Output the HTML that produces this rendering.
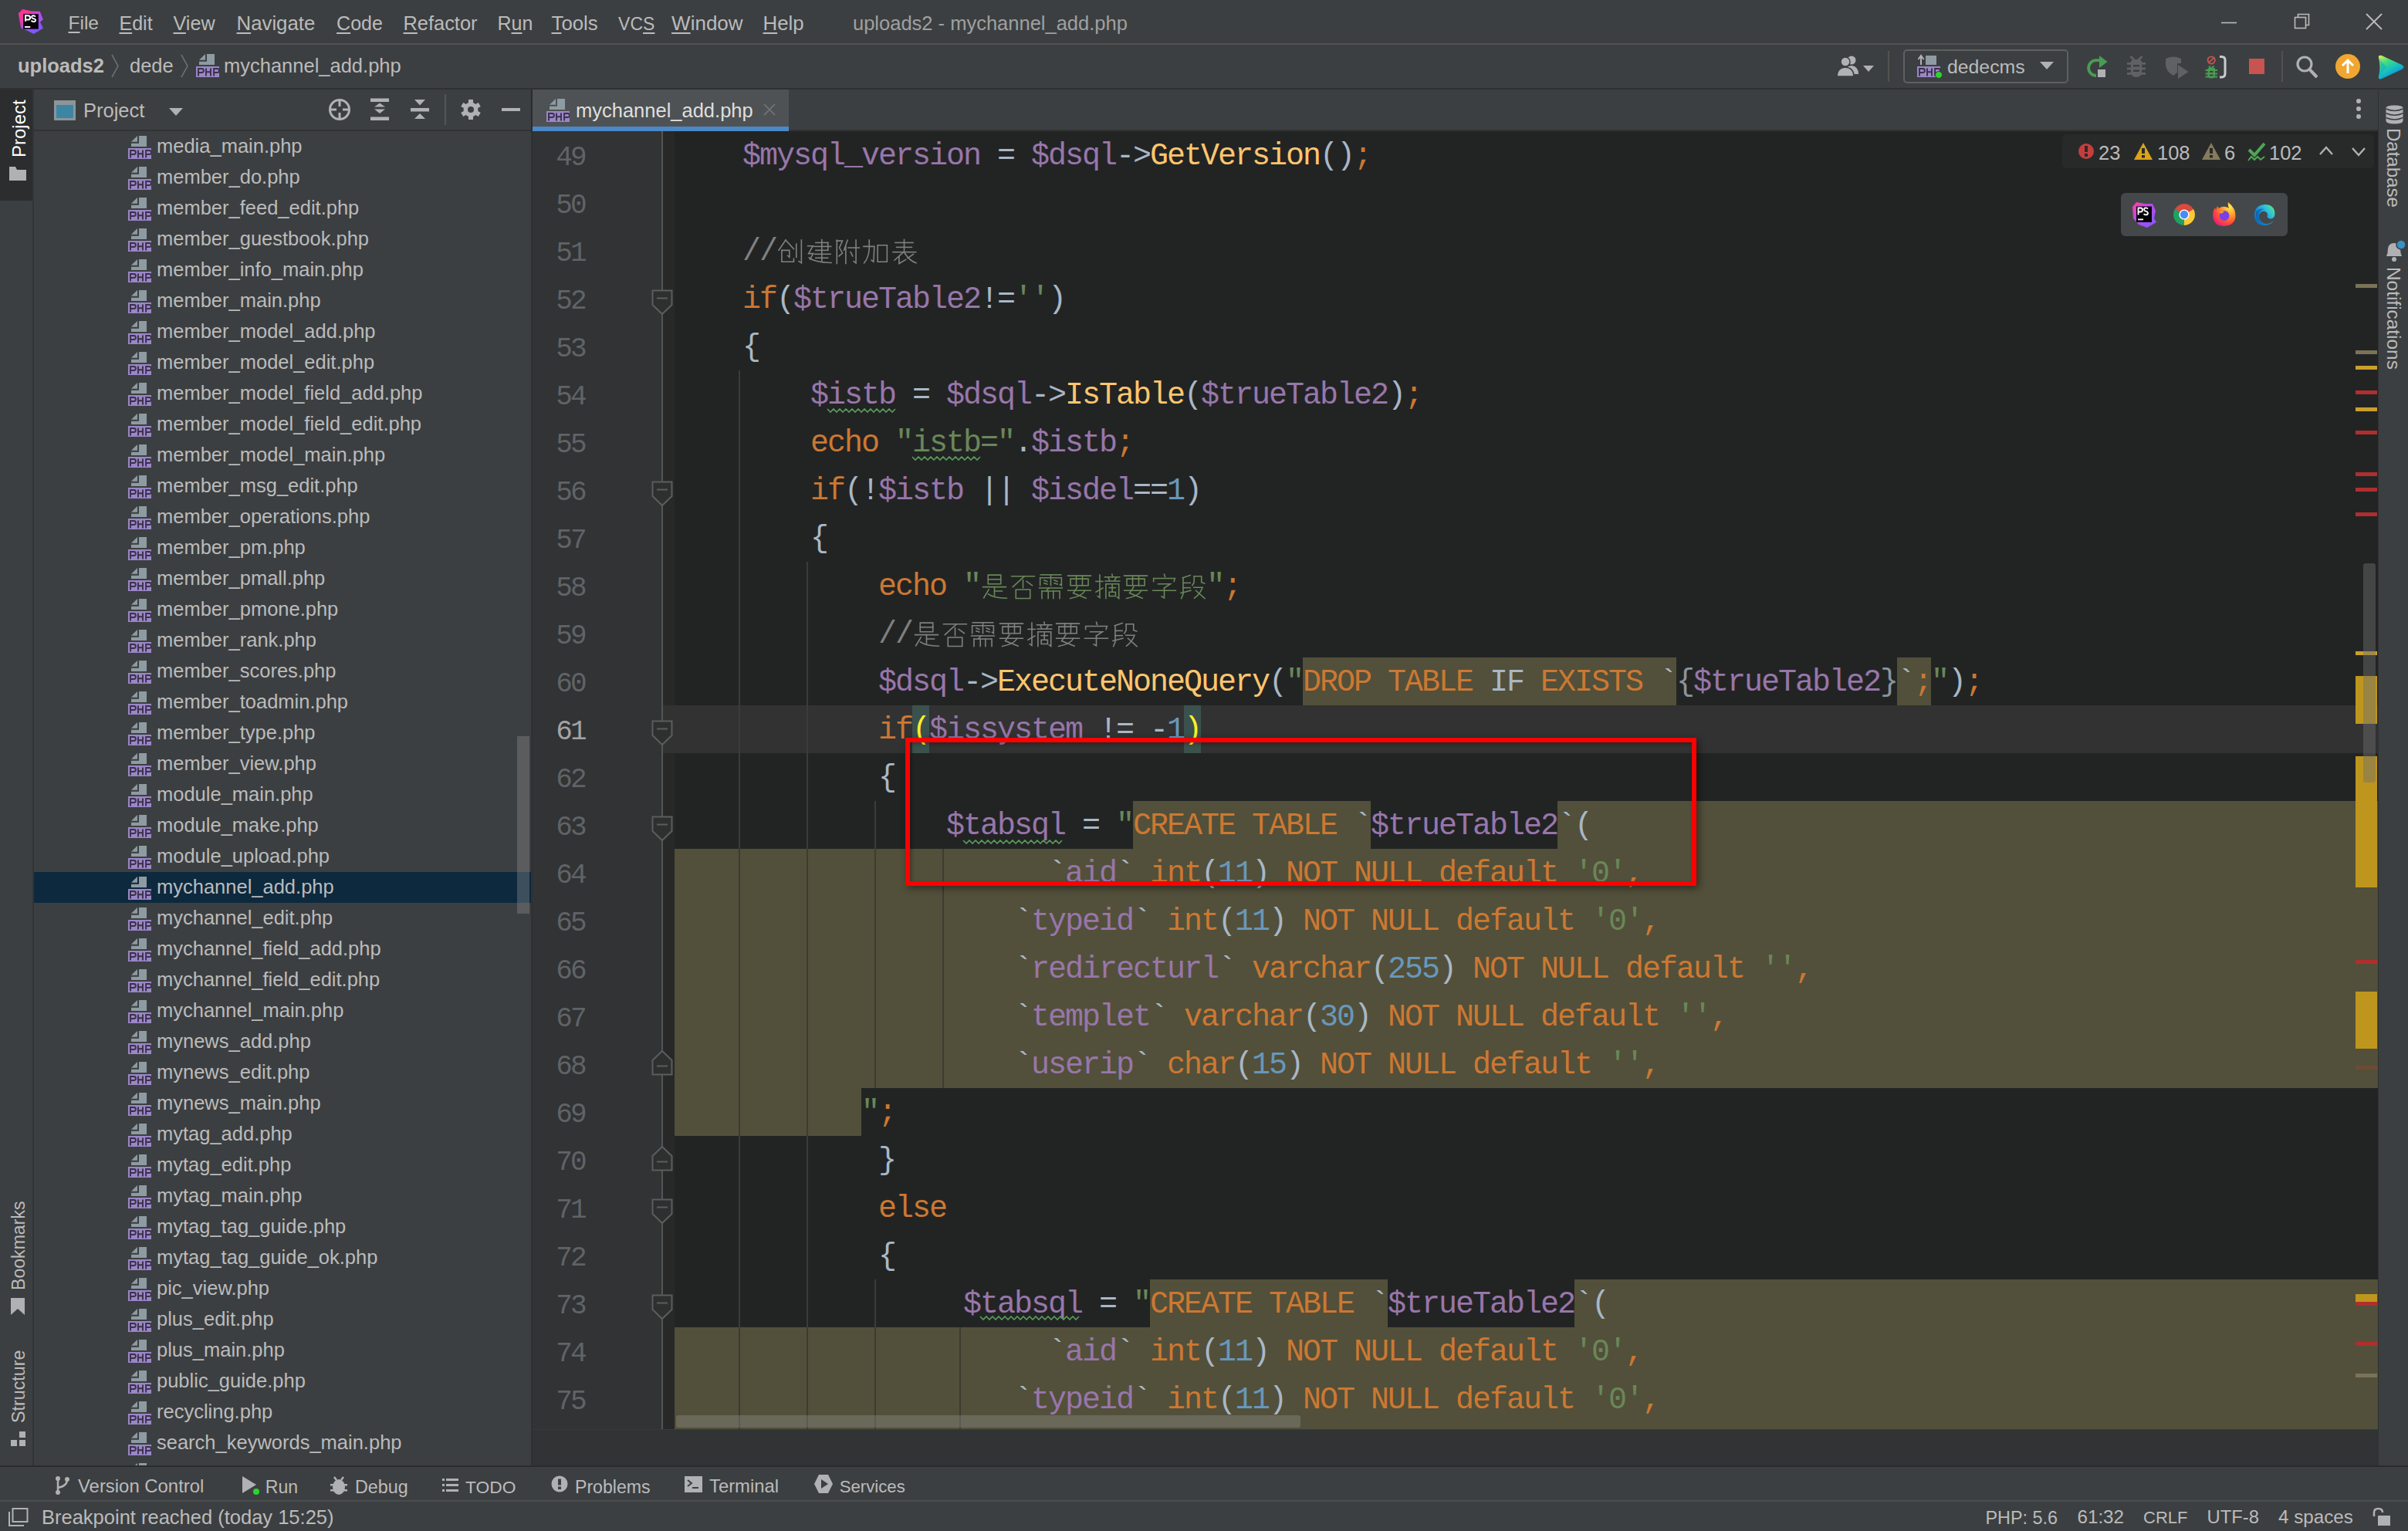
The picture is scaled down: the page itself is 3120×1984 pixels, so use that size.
<!DOCTYPE html><html><head><meta charset="utf-8"><style>
*{margin:0;padding:0;box-sizing:border-box}
html,body{width:3120px;height:1984px;overflow:hidden;background:#3C3F41}
body{position:relative;font-family:"Liberation Sans",sans-serif;color:#BBBBBB}
.ab{position:absolute}
svg{position:absolute;overflow:visible}
.t{position:absolute;white-space:pre}
.code{position:absolute;white-space:pre;font-family:"Liberation Mono",monospace;font-size:40px;letter-spacing:-2.004px;line-height:62px;height:62px;color:#A9B7C6;padding-top:2px}
.k{color:#CC7832}.v{color:#9876AA}.f{color:#FFC66D}.s{color:#6A8759}.n{color:#6897BB}.c{color:#808080}.o{color:#A9B7C6}.g{color:#8A949B}
.bm{color:#FFEF28}
.ln{position:absolute;font-family:"Liberation Mono",monospace;font-size:36px;letter-spacing:-3px;color:#606366;width:80px;text-align:right;left:677.5px;line-height:62px;padding-top:4px}
.ul{position:absolute;height:2px;background:#BBBBBB}
</style></head><body>

<svg style="left:22px;top:10px" width="36" height="36" viewBox="0 0 36 36">
<defs><linearGradient id="psg" x1="0.2" y1="0" x2="0.8" y2="1"><stop offset="0" stop-color="#FF3A8C"/><stop offset="0.45" stop-color="#B84BF2"/><stop offset="1" stop-color="#6E5CF9"/></linearGradient></defs>
<polygon points="1.8,7.3 7.4,1.9 18.9,4.4 29.7,4.7 33.9,15.3 30,18.8 34,26.5 21.8,34.1 10.9,28.5 5.3,26.5" fill="url(#psg)"/>
<polygon points="1.8,7.3 7.4,1.9 18.9,4.4 18.9,8.2 8.1,8.2 8.1,20 5.3,26.5" fill="#FF2D8A" opacity="0.55"/>
<rect x="8.1" y="8.2" width="19.7" height="19.4" fill="#050208"/>
<path d="M11 17.8 V10.2 H14.2 Q17.1 10.2 17.1 12.9 Q17.1 15.5 14.2 15.5 H11" fill="none" stroke="#fff" stroke-width="2"/>
<path d="M24 11.6 Q22.8 10.1 21 10.2 Q18.9 10.4 19.1 12.2 Q19.4 13.6 21.4 14.1 Q24.2 14.7 24.1 16.3 Q23.9 18.1 21.2 18 Q19.5 17.9 18.5 16.6" fill="none" stroke="#fff" stroke-width="1.9"/>
<rect x="10" y="24" width="7.3" height="1.9" fill="#fff"/>
</svg>
<div class="t" style="left:88.5px;top:10.1px;font-size:24.5px;line-height:40px;color:#BBBBBB;font-weight:normal;"><span style="text-decoration:underline;text-underline-offset:3px;text-decoration-thickness:2px">F</span>ile</div>
<div class="t" style="left:154.5px;top:9.6px;font-size:25px;line-height:40px;color:#BBBBBB;font-weight:normal;"><span style="text-decoration:underline;text-underline-offset:3px;text-decoration-thickness:2px">E</span>dit</div>
<div class="t" style="left:224.5px;top:9.6px;font-size:25.2px;line-height:40px;color:#BBBBBB;font-weight:normal;"><span style="text-decoration:underline;text-underline-offset:3px;text-decoration-thickness:2px">V</span>iew</div>
<div class="t" style="left:306.5px;top:9.6px;font-size:25.8px;line-height:40px;color:#BBBBBB;font-weight:normal;"><span style="text-decoration:underline;text-underline-offset:3px;text-decoration-thickness:2px">N</span>avigate</div>
<div class="t" style="left:436.1px;top:9.6px;font-size:25px;line-height:40px;color:#BBBBBB;font-weight:normal;"><span style="text-decoration:underline;text-underline-offset:3px;text-decoration-thickness:2px">C</span>ode</div>
<div class="t" style="left:522.5px;top:9.6px;font-size:25.4px;line-height:40px;color:#BBBBBB;font-weight:normal;"><span style="text-decoration:underline;text-underline-offset:3px;text-decoration-thickness:2px">R</span>efactor</div>
<div class="t" style="left:644.5px;top:9.6px;font-size:25px;line-height:40px;color:#BBBBBB;font-weight:normal;">R<span style="text-decoration:underline;text-underline-offset:3px;text-decoration-thickness:2px">u</span>n</div>
<div class="t" style="left:714.5px;top:9.6px;font-size:25.8px;line-height:40px;color:#BBBBBB;font-weight:normal;"><span style="text-decoration:underline;text-underline-offset:3px;text-decoration-thickness:2px">T</span>ools</div>
<div class="t" style="left:801.1px;top:10.6px;font-size:23px;line-height:40px;color:#BBBBBB;font-weight:normal;">VC<span style="text-decoration:underline;text-underline-offset:3px;text-decoration-thickness:2px">S</span></div>
<div class="t" style="left:870.1px;top:9.6px;font-size:26px;line-height:40px;color:#BBBBBB;font-weight:normal;"><span style="text-decoration:underline;text-underline-offset:3px;text-decoration-thickness:2px">W</span>indow</div>
<div class="t" style="left:988.5px;top:9.6px;font-size:25.8px;line-height:40px;color:#BBBBBB;font-weight:normal;"><span style="text-decoration:underline;text-underline-offset:3px;text-decoration-thickness:2px">H</span>elp</div>
<div class="t" style="left:1105.0px;top:9.6px;font-size:25.5px;line-height:40px;color:#A0A0A0;font-weight:normal;">uploads2 - mychannel_add.php</div>
<svg style="left:2876px;top:18px" width="24" height="24"><line x1="2" y1="11.5" x2="22" y2="11.5" stroke="#BBBBBB" stroke-width="1.6"/></svg>
<svg style="left:2970px;top:15px" width="26" height="26"><rect x="3.5" y="7.5" width="14" height="14" fill="none" stroke="#BBBBBB" stroke-width="1.6"/><path d="M7.5 7.5 V3.5 H21.5 V17.5 H17.5" fill="none" stroke="#BBBBBB" stroke-width="1.6"/></svg>
<svg style="left:3064px;top:16px" width="24" height="24"><path d="M2 2 L22 22 M22 2 L2 22" stroke="#BBBBBB" stroke-width="1.8"/></svg>
<div class="ab" style="left:0px;top:56px;width:3120px;height:2px;background:#515151;"></div>
<div class="t" style="left:23.0px;top:65.0px;font-size:25.5px;line-height:40px;color:#BBBBBB;font-weight:bold;">uploads2</div>
<svg style="left:143px;top:70px" width="12" height="32"><path d="M2 1 L10 15.5 L2 30" fill="none" stroke="#6B6E70" stroke-width="1.6"/></svg>
<div class="t" style="left:168.0px;top:65.0px;font-size:25.5px;line-height:40px;color:#BBBBBB;font-weight:normal;">dede</div>
<svg style="left:233px;top:70px" width="12" height="32"><path d="M2 1 L10 15.5 L2 30" fill="none" stroke="#6B6E70" stroke-width="1.6"/></svg>
<svg style="left:254px;top:70px;overflow:hidden" width="30" height="30" viewBox="0 0 30 30">
<polygon points="4,7.8 12,0 12,7.8" fill="#8E9BA2"/><rect x="14" y="0" width="10" height="14" fill="#8E9BA2"/><rect x="4" y="9.8" width="20" height="4.2" fill="#8E9BA2"/>
<rect x="0" y="16" width="30" height="14" fill="#9A86C8"/><path d="M3 28.5 V19 H7.4 Q9.9 19 9.9 21.5 Q9.9 24 7.4 24 H3 M13 28.5 V18.6 M19 28.5 V18.6 M13 23.2 H19 M23.1 28.5 V19 H27.5 Q30 19 30 21.5 Q30 24 27.5 24 H23.1" fill="none" stroke="#3A3148" stroke-width="1.9"/>
</svg>
<div class="t" style="left:290.0px;top:65.0px;font-size:25.5px;line-height:40px;color:#BBBBBB;font-weight:normal;">mychannel_add.php</div>
<svg style="left:2378px;top:70px" width="56" height="32" viewBox="0 0 56 32">
<circle cx="21" cy="8" r="5.5" fill="#AFB1B3"/><path d="M12 26 Q12 16 21 15 Q30 16 30 26 Z" fill="#AFB1B3"/>
<circle cx="13" cy="10" r="6" fill="#AFB1B3" stroke="#3C3F41" stroke-width="1.5"/><path d="M2 29 Q2 18 13 17 Q24 18 24 29 Z" fill="#AFB1B3" stroke="#3C3F41" stroke-width="1.5"/>
<polygon points="36,15 50,15 43,23" fill="#AFB1B3"/></svg>
<div class="ab" style="left:2446px;top:66px;width:2px;height:40px;background:#515151;"></div>
<div class="ab" style="left:2466px;top:64px;width:214px;height:44px;border:2px solid #5E6060;border-radius:5px"></div>
<svg style="left:2484px;top:70px" width="34" height="32" viewBox="0 0 34 32">
<rect x="11" y="2" width="14" height="12" fill="#8E9BA2"/><path d="M5 14 L5 3 M1.5 7 L5 2 L8.5 7" stroke="#AFB1B3" stroke-width="2" fill="none"/>
<rect x="0" y="16" width="30" height="14" fill="#9A86C8"/><path d="M3 28.5 V19 H7.4 Q9.9 19 9.9 21.5 Q9.9 24 7.4 24 H3 M13 28.5 V18.6 M19 28.5 V18.6 M13 23.2 H19 M23.1 28.5 V19 H27.5 Q30 19 30 21.5 Q30 24 27.5 24 H23.1" fill="none" stroke="#3A3148" stroke-width="1.9"/>
<circle cx="28" cy="27" r="4.5" fill="#2DD22D" stroke="#3C3F41" stroke-width="1"/></svg>
<div class="t" style="left:2523.0px;top:67.0px;font-size:24.8px;line-height:40px;color:#BBBBBB;font-weight:normal;">dedecms</div>
<svg style="left:2641px;top:78px" width="24" height="16"><polygon points="2,2 20,2 11,12" fill="#AFB1B3"/></svg>
<svg style="left:2702px;top:70px" width="32" height="32" viewBox="0 0 32 32">
<path d="M14 28 A9.9 9.9 0 0 1 14 8.2 H19" fill="none" stroke="#499C54" stroke-width="3.8"/>
<polygon points="18,2 28.6,10 18,18" fill="#499C54"/><rect x="16" y="20" width="10" height="10" fill="#AFB1B3"/></svg>
<svg style="left:2753px;top:70px" width="30" height="32" viewBox="0 0 30 32">
<path d="M7.5 3 L13 8.5 M22.5 3 L17 8.5" stroke="#5F6163" stroke-width="2.8"/>
<path d="M8 10 Q8 7 15 7 Q22 7 22 10 V23 Q22 30 15 30 Q8 30 8 23 Z" fill="#5F6163"/>
<rect x="3" y="11" width="24" height="2.8" fill="#5F6163"/><rect x="3" y="17.5" width="24" height="2.8" fill="#5F6163"/><rect x="3" y="24" width="24" height="2.8" fill="#5F6163"/>
<rect x="11" y="14" width="8" height="2.5" fill="#3C3F41"/><rect x="11" y="20.5" width="8" height="2.5" fill="#3C3F41"/></svg>
<svg style="left:2804px;top:70px" width="34" height="34" viewBox="0 0 34 34">
<path d="M2 6 Q12 1 22 6 V12 H17 V24 L12 28 Q2 22 2 14 Z" fill="#5F6163"/><polygon points="18,14 31.5,23 18,32" fill="#5F6163"/></svg>
<svg style="left:2856px;top:70px" width="32" height="34" viewBox="0 0 32 34">
<circle cx="9.2" cy="8" r="4.6" fill="none" stroke="#C75450" stroke-width="1.9"/><path d="M6 11.2 L12.4 4.8" stroke="#C75450" stroke-width="1.9"/>
<path d="M6 15.5 L8.5 18 M12.5 15.5 L10 18" stroke="#499C54" stroke-width="1.8"/>
<path d="M4.5 19 Q4.5 17.5 9.2 17.5 Q14 17.5 14 19 V27 Q14 31.5 9.2 31.5 Q4.5 31.5 4.5 27 Z" fill="#499C54"/>
<rect x="1.5" y="20" width="15.5" height="2" fill="#499C54"/><rect x="1.5" y="24.5" width="15.5" height="2" fill="#499C54"/><rect x="1.5" y="28.5" width="15.5" height="2" fill="#499C54"/>
<rect x="7" y="22" width="4.5" height="2" fill="#3C3F41"/><rect x="7" y="26.5" width="4.5" height="2" fill="#3C3F41"/>
<path d="M20 3.5 H22.5 Q27 3.5 27 8 V25 Q27 30 22.5 30 H20" fill="none" stroke="#C9CBCD" stroke-width="3"/></svg>
<div class="ab" style="left:2914px;top:76px;width:20px;height:20px;background:#C75450;"></div>
<div class="ab" style="left:2956px;top:66px;width:2px;height:40px;background:#515151;"></div>
<svg style="left:2974px;top:70px" width="32" height="34" viewBox="0 0 32 34"><circle cx="12" cy="13" r="9" fill="none" stroke="#AFB1B3" stroke-width="3.2"/><path d="M18.5 20 L28 30" stroke="#AFB1B3" stroke-width="4"/></svg>
<svg style="left:3026px;top:70px" width="32" height="32" viewBox="0 0 32 32"><circle cx="16" cy="16" r="16" fill="#F0A732"/><path d="M16 25 V9 M9 15 L16 8 L23 15" fill="none" stroke="#fff" stroke-width="3"/></svg>
<svg style="left:3078px;top:69px" width="42" height="36" viewBox="0 0 42 36">
<defs><linearGradient id="tbg" x1="0" y1="0" x2="0.6" y2="1"><stop offset="0" stop-color="#E8F24A"/><stop offset="0.35" stop-color="#3DDC84"/><stop offset="0.7" stop-color="#10B9C9"/><stop offset="1" stop-color="#1E73D6"/></linearGradient></defs>
<path d="M4 6 Q3 2 8 3 L34 15 Q39 18 34 21 L8 33 Q3 35 4 30 Q7 18 4 6 Z" fill="url(#tbg)"/>
<path d="M4 6 Q10 18 4 30 L14 18 Z" fill="#0DA5D8" opacity="0.5"/></svg>
<div class="ab" style="left:0px;top:114px;width:3120px;height:2px;background:#2F3031;"></div>
<div class="ab" style="left:0px;top:116px;width:42px;height:144px;background:#2B2D2F;"></div>
<div class="ab" style="left:42px;top:116px;width:2px;height:1784px;background:#323436;"></div>
<div class="t" style="left:7px;top:204px;font-size:24px;line-height:36px;color:#FFFFFF;transform-origin:0 0;transform:rotate(-90deg)">Project</div>
<svg style="left:11px;top:215px" width="24" height="20" viewBox="0 0 24 20"><path d="M1 1 H9 L11 5 H23 V19 H1 Z" fill="#AFB1B3"/></svg>
<div class="t" style="left:6px;top:1672px;font-size:23.1px;line-height:36px;color:#BBBBBB;transform-origin:0 0;transform:rotate(-90deg)">Bookmarks</div>
<svg style="left:13px;top:1681px" width="20" height="24" viewBox="0 0 20 24"><path d="M1 1 H19 V23 L10 15 L1 23 Z" fill="#AFB1B3"/></svg>
<div class="t" style="left:6px;top:1844px;font-size:23.3px;line-height:36px;color:#BBBBBB;transform-origin:0 0;transform:rotate(-90deg)">Structure</div>
<svg style="left:14px;top:1855px" width="20" height="20" viewBox="0 0 20 20"><rect x="11" y="0" width="8" height="8" fill="#AFB1B3"/><rect x="0" y="11" width="8" height="8" fill="#AFB1B3"/><rect x="11" y="11" width="8" height="8" fill="#AFB1B3"/></svg>
<svg style="left:70px;top:130px" width="28" height="26" viewBox="0 0 28 26"><rect x="0" y="0" width="28" height="26" fill="#8C9598"/><rect x="3" y="6" width="22" height="17" fill="#3D86A3"/></svg>
<div class="t" style="left:108.0px;top:123.3px;font-size:25.5px;line-height:40px;color:#BBBBBB;font-weight:normal;">Project</div>
<svg style="left:218px;top:138px" width="20" height="14"><polygon points="1,2 19,2 10,12" fill="#AFB1B3"/></svg>
<svg style="left:425px;top:127px" width="30" height="30" viewBox="0 0 30 30"><circle cx="15" cy="15" r="12.5" fill="none" stroke="#AFB1B3" stroke-width="3"/><path d="M15 2 V11 M15 19 V28 M2 15 H11 M19 15 H28" stroke="#AFB1B3" stroke-width="3"/></svg>
<svg style="left:480px;top:127px" width="25" height="30" viewBox="0 0 25 30"><rect x="0" y="0.5" width="24" height="4.5" fill="#AFB1B3"/><rect x="0" y="24.5" width="24" height="4.5" fill="#AFB1B3"/><polygon points="12,6.5 19,11.5 5,11.5" fill="#AFB1B3"/><polygon points="5,14.5 19,14.5 12,20" fill="#AFB1B3"/></svg>
<svg style="left:532px;top:127px" width="25" height="30" viewBox="0 0 25 30"><polygon points="5,2 19,2 12,9.5" fill="#AFB1B3"/><rect x="0" y="13" width="24" height="4.5" fill="#AFB1B3"/><polygon points="12,20 19,27 5,27" fill="#AFB1B3"/></svg>
<div class="ab" style="left:576px;top:122px;width:2px;height:40px;background:#555555;"></div>
<svg style="left:596px;top:128px" width="28" height="28" viewBox="0 0 28 28"><g fill="#AFB1B3" transform="translate(14,14)">
<circle r="9.5"/><rect x="-3" y="-13" width="6" height="26"/><rect x="-3" y="-13" width="6" height="26" transform="rotate(60)"/><rect x="-3" y="-13" width="6" height="26" transform="rotate(120)"/></g>
<circle cx="14" cy="14" r="4" fill="#3C3F41"/></svg>
<div class="ab" style="left:650px;top:140px;width:24px;height:4px;background:#AFB1B3;"></div>
<div class="ab" style="left:44px;top:168px;width:644px;height:2px;background:#323232;"></div>
<div class="ab" style="left:44px;top:170px;width:644px;height:1729px;overflow:hidden">
<div class="ab" style="left:0px;top:960px;width:644px;height:40px;background:#0D293E;"></div>
<svg style="left:122px;top:6px;overflow:hidden" width="30" height="30" viewBox="0 0 30 30">
<polygon points="4,7.8 12,0 12,7.8" fill="#8E9BA2"/><rect x="14" y="0" width="10" height="14" fill="#8E9BA2"/><rect x="4" y="9.8" width="20" height="4.2" fill="#8E9BA2"/>
<rect x="0" y="16" width="30" height="14" fill="#9A86C8"/><path d="M3 28.5 V19 H7.4 Q9.9 19 9.9 21.5 Q9.9 24 7.4 24 H3 M13 28.5 V18.6 M19 28.5 V18.6 M13 23.2 H19 M23.1 28.5 V19 H27.5 Q30 19 30 21.5 Q30 24 27.5 24 H23.1" fill="none" stroke="#3A3148" stroke-width="1.9"/>
</svg>
<div class="t" style="left:159.0px;top:-1.0px;font-size:25.5px;line-height:40px;color:#BBBBBB">media_main.php</div>
<svg style="left:122px;top:46px;overflow:hidden" width="30" height="30" viewBox="0 0 30 30">
<polygon points="4,7.8 12,0 12,7.8" fill="#8E9BA2"/><rect x="14" y="0" width="10" height="14" fill="#8E9BA2"/><rect x="4" y="9.8" width="20" height="4.2" fill="#8E9BA2"/>
<rect x="0" y="16" width="30" height="14" fill="#9A86C8"/><path d="M3 28.5 V19 H7.4 Q9.9 19 9.9 21.5 Q9.9 24 7.4 24 H3 M13 28.5 V18.6 M19 28.5 V18.6 M13 23.2 H19 M23.1 28.5 V19 H27.5 Q30 19 30 21.5 Q30 24 27.5 24 H23.1" fill="none" stroke="#3A3148" stroke-width="1.9"/>
</svg>
<div class="t" style="left:159.0px;top:39.0px;font-size:25.5px;line-height:40px;color:#BBBBBB">member_do.php</div>
<svg style="left:122px;top:86px;overflow:hidden" width="30" height="30" viewBox="0 0 30 30">
<polygon points="4,7.8 12,0 12,7.8" fill="#8E9BA2"/><rect x="14" y="0" width="10" height="14" fill="#8E9BA2"/><rect x="4" y="9.8" width="20" height="4.2" fill="#8E9BA2"/>
<rect x="0" y="16" width="30" height="14" fill="#9A86C8"/><path d="M3 28.5 V19 H7.4 Q9.9 19 9.9 21.5 Q9.9 24 7.4 24 H3 M13 28.5 V18.6 M19 28.5 V18.6 M13 23.2 H19 M23.1 28.5 V19 H27.5 Q30 19 30 21.5 Q30 24 27.5 24 H23.1" fill="none" stroke="#3A3148" stroke-width="1.9"/>
</svg>
<div class="t" style="left:159.0px;top:79.0px;font-size:25.5px;line-height:40px;color:#BBBBBB">member_feed_edit.php</div>
<svg style="left:122px;top:126px;overflow:hidden" width="30" height="30" viewBox="0 0 30 30">
<polygon points="4,7.8 12,0 12,7.8" fill="#8E9BA2"/><rect x="14" y="0" width="10" height="14" fill="#8E9BA2"/><rect x="4" y="9.8" width="20" height="4.2" fill="#8E9BA2"/>
<rect x="0" y="16" width="30" height="14" fill="#9A86C8"/><path d="M3 28.5 V19 H7.4 Q9.9 19 9.9 21.5 Q9.9 24 7.4 24 H3 M13 28.5 V18.6 M19 28.5 V18.6 M13 23.2 H19 M23.1 28.5 V19 H27.5 Q30 19 30 21.5 Q30 24 27.5 24 H23.1" fill="none" stroke="#3A3148" stroke-width="1.9"/>
</svg>
<div class="t" style="left:159.0px;top:119.0px;font-size:25.5px;line-height:40px;color:#BBBBBB">member_guestbook.php</div>
<svg style="left:122px;top:166px;overflow:hidden" width="30" height="30" viewBox="0 0 30 30">
<polygon points="4,7.8 12,0 12,7.8" fill="#8E9BA2"/><rect x="14" y="0" width="10" height="14" fill="#8E9BA2"/><rect x="4" y="9.8" width="20" height="4.2" fill="#8E9BA2"/>
<rect x="0" y="16" width="30" height="14" fill="#9A86C8"/><path d="M3 28.5 V19 H7.4 Q9.9 19 9.9 21.5 Q9.9 24 7.4 24 H3 M13 28.5 V18.6 M19 28.5 V18.6 M13 23.2 H19 M23.1 28.5 V19 H27.5 Q30 19 30 21.5 Q30 24 27.5 24 H23.1" fill="none" stroke="#3A3148" stroke-width="1.9"/>
</svg>
<div class="t" style="left:159.0px;top:159.0px;font-size:25.5px;line-height:40px;color:#BBBBBB">member_info_main.php</div>
<svg style="left:122px;top:206px;overflow:hidden" width="30" height="30" viewBox="0 0 30 30">
<polygon points="4,7.8 12,0 12,7.8" fill="#8E9BA2"/><rect x="14" y="0" width="10" height="14" fill="#8E9BA2"/><rect x="4" y="9.8" width="20" height="4.2" fill="#8E9BA2"/>
<rect x="0" y="16" width="30" height="14" fill="#9A86C8"/><path d="M3 28.5 V19 H7.4 Q9.9 19 9.9 21.5 Q9.9 24 7.4 24 H3 M13 28.5 V18.6 M19 28.5 V18.6 M13 23.2 H19 M23.1 28.5 V19 H27.5 Q30 19 30 21.5 Q30 24 27.5 24 H23.1" fill="none" stroke="#3A3148" stroke-width="1.9"/>
</svg>
<div class="t" style="left:159.0px;top:199.0px;font-size:25.5px;line-height:40px;color:#BBBBBB">member_main.php</div>
<svg style="left:122px;top:246px;overflow:hidden" width="30" height="30" viewBox="0 0 30 30">
<polygon points="4,7.8 12,0 12,7.8" fill="#8E9BA2"/><rect x="14" y="0" width="10" height="14" fill="#8E9BA2"/><rect x="4" y="9.8" width="20" height="4.2" fill="#8E9BA2"/>
<rect x="0" y="16" width="30" height="14" fill="#9A86C8"/><path d="M3 28.5 V19 H7.4 Q9.9 19 9.9 21.5 Q9.9 24 7.4 24 H3 M13 28.5 V18.6 M19 28.5 V18.6 M13 23.2 H19 M23.1 28.5 V19 H27.5 Q30 19 30 21.5 Q30 24 27.5 24 H23.1" fill="none" stroke="#3A3148" stroke-width="1.9"/>
</svg>
<div class="t" style="left:159.0px;top:239.0px;font-size:25.5px;line-height:40px;color:#BBBBBB">member_model_add.php</div>
<svg style="left:122px;top:286px;overflow:hidden" width="30" height="30" viewBox="0 0 30 30">
<polygon points="4,7.8 12,0 12,7.8" fill="#8E9BA2"/><rect x="14" y="0" width="10" height="14" fill="#8E9BA2"/><rect x="4" y="9.8" width="20" height="4.2" fill="#8E9BA2"/>
<rect x="0" y="16" width="30" height="14" fill="#9A86C8"/><path d="M3 28.5 V19 H7.4 Q9.9 19 9.9 21.5 Q9.9 24 7.4 24 H3 M13 28.5 V18.6 M19 28.5 V18.6 M13 23.2 H19 M23.1 28.5 V19 H27.5 Q30 19 30 21.5 Q30 24 27.5 24 H23.1" fill="none" stroke="#3A3148" stroke-width="1.9"/>
</svg>
<div class="t" style="left:159.0px;top:279.0px;font-size:25.5px;line-height:40px;color:#BBBBBB">member_model_edit.php</div>
<svg style="left:122px;top:326px;overflow:hidden" width="30" height="30" viewBox="0 0 30 30">
<polygon points="4,7.8 12,0 12,7.8" fill="#8E9BA2"/><rect x="14" y="0" width="10" height="14" fill="#8E9BA2"/><rect x="4" y="9.8" width="20" height="4.2" fill="#8E9BA2"/>
<rect x="0" y="16" width="30" height="14" fill="#9A86C8"/><path d="M3 28.5 V19 H7.4 Q9.9 19 9.9 21.5 Q9.9 24 7.4 24 H3 M13 28.5 V18.6 M19 28.5 V18.6 M13 23.2 H19 M23.1 28.5 V19 H27.5 Q30 19 30 21.5 Q30 24 27.5 24 H23.1" fill="none" stroke="#3A3148" stroke-width="1.9"/>
</svg>
<div class="t" style="left:159.0px;top:319.0px;font-size:25.5px;line-height:40px;color:#BBBBBB">member_model_field_add.php</div>
<svg style="left:122px;top:366px;overflow:hidden" width="30" height="30" viewBox="0 0 30 30">
<polygon points="4,7.8 12,0 12,7.8" fill="#8E9BA2"/><rect x="14" y="0" width="10" height="14" fill="#8E9BA2"/><rect x="4" y="9.8" width="20" height="4.2" fill="#8E9BA2"/>
<rect x="0" y="16" width="30" height="14" fill="#9A86C8"/><path d="M3 28.5 V19 H7.4 Q9.9 19 9.9 21.5 Q9.9 24 7.4 24 H3 M13 28.5 V18.6 M19 28.5 V18.6 M13 23.2 H19 M23.1 28.5 V19 H27.5 Q30 19 30 21.5 Q30 24 27.5 24 H23.1" fill="none" stroke="#3A3148" stroke-width="1.9"/>
</svg>
<div class="t" style="left:159.0px;top:359.0px;font-size:25.5px;line-height:40px;color:#BBBBBB">member_model_field_edit.php</div>
<svg style="left:122px;top:406px;overflow:hidden" width="30" height="30" viewBox="0 0 30 30">
<polygon points="4,7.8 12,0 12,7.8" fill="#8E9BA2"/><rect x="14" y="0" width="10" height="14" fill="#8E9BA2"/><rect x="4" y="9.8" width="20" height="4.2" fill="#8E9BA2"/>
<rect x="0" y="16" width="30" height="14" fill="#9A86C8"/><path d="M3 28.5 V19 H7.4 Q9.9 19 9.9 21.5 Q9.9 24 7.4 24 H3 M13 28.5 V18.6 M19 28.5 V18.6 M13 23.2 H19 M23.1 28.5 V19 H27.5 Q30 19 30 21.5 Q30 24 27.5 24 H23.1" fill="none" stroke="#3A3148" stroke-width="1.9"/>
</svg>
<div class="t" style="left:159.0px;top:399.0px;font-size:25.5px;line-height:40px;color:#BBBBBB">member_model_main.php</div>
<svg style="left:122px;top:446px;overflow:hidden" width="30" height="30" viewBox="0 0 30 30">
<polygon points="4,7.8 12,0 12,7.8" fill="#8E9BA2"/><rect x="14" y="0" width="10" height="14" fill="#8E9BA2"/><rect x="4" y="9.8" width="20" height="4.2" fill="#8E9BA2"/>
<rect x="0" y="16" width="30" height="14" fill="#9A86C8"/><path d="M3 28.5 V19 H7.4 Q9.9 19 9.9 21.5 Q9.9 24 7.4 24 H3 M13 28.5 V18.6 M19 28.5 V18.6 M13 23.2 H19 M23.1 28.5 V19 H27.5 Q30 19 30 21.5 Q30 24 27.5 24 H23.1" fill="none" stroke="#3A3148" stroke-width="1.9"/>
</svg>
<div class="t" style="left:159.0px;top:439.0px;font-size:25.5px;line-height:40px;color:#BBBBBB">member_msg_edit.php</div>
<svg style="left:122px;top:486px;overflow:hidden" width="30" height="30" viewBox="0 0 30 30">
<polygon points="4,7.8 12,0 12,7.8" fill="#8E9BA2"/><rect x="14" y="0" width="10" height="14" fill="#8E9BA2"/><rect x="4" y="9.8" width="20" height="4.2" fill="#8E9BA2"/>
<rect x="0" y="16" width="30" height="14" fill="#9A86C8"/><path d="M3 28.5 V19 H7.4 Q9.9 19 9.9 21.5 Q9.9 24 7.4 24 H3 M13 28.5 V18.6 M19 28.5 V18.6 M13 23.2 H19 M23.1 28.5 V19 H27.5 Q30 19 30 21.5 Q30 24 27.5 24 H23.1" fill="none" stroke="#3A3148" stroke-width="1.9"/>
</svg>
<div class="t" style="left:159.0px;top:479.0px;font-size:25.5px;line-height:40px;color:#BBBBBB">member_operations.php</div>
<svg style="left:122px;top:526px;overflow:hidden" width="30" height="30" viewBox="0 0 30 30">
<polygon points="4,7.8 12,0 12,7.8" fill="#8E9BA2"/><rect x="14" y="0" width="10" height="14" fill="#8E9BA2"/><rect x="4" y="9.8" width="20" height="4.2" fill="#8E9BA2"/>
<rect x="0" y="16" width="30" height="14" fill="#9A86C8"/><path d="M3 28.5 V19 H7.4 Q9.9 19 9.9 21.5 Q9.9 24 7.4 24 H3 M13 28.5 V18.6 M19 28.5 V18.6 M13 23.2 H19 M23.1 28.5 V19 H27.5 Q30 19 30 21.5 Q30 24 27.5 24 H23.1" fill="none" stroke="#3A3148" stroke-width="1.9"/>
</svg>
<div class="t" style="left:159.0px;top:519.0px;font-size:25.5px;line-height:40px;color:#BBBBBB">member_pm.php</div>
<svg style="left:122px;top:566px;overflow:hidden" width="30" height="30" viewBox="0 0 30 30">
<polygon points="4,7.8 12,0 12,7.8" fill="#8E9BA2"/><rect x="14" y="0" width="10" height="14" fill="#8E9BA2"/><rect x="4" y="9.8" width="20" height="4.2" fill="#8E9BA2"/>
<rect x="0" y="16" width="30" height="14" fill="#9A86C8"/><path d="M3 28.5 V19 H7.4 Q9.9 19 9.9 21.5 Q9.9 24 7.4 24 H3 M13 28.5 V18.6 M19 28.5 V18.6 M13 23.2 H19 M23.1 28.5 V19 H27.5 Q30 19 30 21.5 Q30 24 27.5 24 H23.1" fill="none" stroke="#3A3148" stroke-width="1.9"/>
</svg>
<div class="t" style="left:159.0px;top:559.0px;font-size:25.5px;line-height:40px;color:#BBBBBB">member_pmall.php</div>
<svg style="left:122px;top:606px;overflow:hidden" width="30" height="30" viewBox="0 0 30 30">
<polygon points="4,7.8 12,0 12,7.8" fill="#8E9BA2"/><rect x="14" y="0" width="10" height="14" fill="#8E9BA2"/><rect x="4" y="9.8" width="20" height="4.2" fill="#8E9BA2"/>
<rect x="0" y="16" width="30" height="14" fill="#9A86C8"/><path d="M3 28.5 V19 H7.4 Q9.9 19 9.9 21.5 Q9.9 24 7.4 24 H3 M13 28.5 V18.6 M19 28.5 V18.6 M13 23.2 H19 M23.1 28.5 V19 H27.5 Q30 19 30 21.5 Q30 24 27.5 24 H23.1" fill="none" stroke="#3A3148" stroke-width="1.9"/>
</svg>
<div class="t" style="left:159.0px;top:599.0px;font-size:25.5px;line-height:40px;color:#BBBBBB">member_pmone.php</div>
<svg style="left:122px;top:646px;overflow:hidden" width="30" height="30" viewBox="0 0 30 30">
<polygon points="4,7.8 12,0 12,7.8" fill="#8E9BA2"/><rect x="14" y="0" width="10" height="14" fill="#8E9BA2"/><rect x="4" y="9.8" width="20" height="4.2" fill="#8E9BA2"/>
<rect x="0" y="16" width="30" height="14" fill="#9A86C8"/><path d="M3 28.5 V19 H7.4 Q9.9 19 9.9 21.5 Q9.9 24 7.4 24 H3 M13 28.5 V18.6 M19 28.5 V18.6 M13 23.2 H19 M23.1 28.5 V19 H27.5 Q30 19 30 21.5 Q30 24 27.5 24 H23.1" fill="none" stroke="#3A3148" stroke-width="1.9"/>
</svg>
<div class="t" style="left:159.0px;top:639.0px;font-size:25.5px;line-height:40px;color:#BBBBBB">member_rank.php</div>
<svg style="left:122px;top:686px;overflow:hidden" width="30" height="30" viewBox="0 0 30 30">
<polygon points="4,7.8 12,0 12,7.8" fill="#8E9BA2"/><rect x="14" y="0" width="10" height="14" fill="#8E9BA2"/><rect x="4" y="9.8" width="20" height="4.2" fill="#8E9BA2"/>
<rect x="0" y="16" width="30" height="14" fill="#9A86C8"/><path d="M3 28.5 V19 H7.4 Q9.9 19 9.9 21.5 Q9.9 24 7.4 24 H3 M13 28.5 V18.6 M19 28.5 V18.6 M13 23.2 H19 M23.1 28.5 V19 H27.5 Q30 19 30 21.5 Q30 24 27.5 24 H23.1" fill="none" stroke="#3A3148" stroke-width="1.9"/>
</svg>
<div class="t" style="left:159.0px;top:679.0px;font-size:25.5px;line-height:40px;color:#BBBBBB">member_scores.php</div>
<svg style="left:122px;top:726px;overflow:hidden" width="30" height="30" viewBox="0 0 30 30">
<polygon points="4,7.8 12,0 12,7.8" fill="#8E9BA2"/><rect x="14" y="0" width="10" height="14" fill="#8E9BA2"/><rect x="4" y="9.8" width="20" height="4.2" fill="#8E9BA2"/>
<rect x="0" y="16" width="30" height="14" fill="#9A86C8"/><path d="M3 28.5 V19 H7.4 Q9.9 19 9.9 21.5 Q9.9 24 7.4 24 H3 M13 28.5 V18.6 M19 28.5 V18.6 M13 23.2 H19 M23.1 28.5 V19 H27.5 Q30 19 30 21.5 Q30 24 27.5 24 H23.1" fill="none" stroke="#3A3148" stroke-width="1.9"/>
</svg>
<div class="t" style="left:159.0px;top:719.0px;font-size:25.5px;line-height:40px;color:#BBBBBB">member_toadmin.php</div>
<svg style="left:122px;top:766px;overflow:hidden" width="30" height="30" viewBox="0 0 30 30">
<polygon points="4,7.8 12,0 12,7.8" fill="#8E9BA2"/><rect x="14" y="0" width="10" height="14" fill="#8E9BA2"/><rect x="4" y="9.8" width="20" height="4.2" fill="#8E9BA2"/>
<rect x="0" y="16" width="30" height="14" fill="#9A86C8"/><path d="M3 28.5 V19 H7.4 Q9.9 19 9.9 21.5 Q9.9 24 7.4 24 H3 M13 28.5 V18.6 M19 28.5 V18.6 M13 23.2 H19 M23.1 28.5 V19 H27.5 Q30 19 30 21.5 Q30 24 27.5 24 H23.1" fill="none" stroke="#3A3148" stroke-width="1.9"/>
</svg>
<div class="t" style="left:159.0px;top:759.0px;font-size:25.5px;line-height:40px;color:#BBBBBB">member_type.php</div>
<svg style="left:122px;top:806px;overflow:hidden" width="30" height="30" viewBox="0 0 30 30">
<polygon points="4,7.8 12,0 12,7.8" fill="#8E9BA2"/><rect x="14" y="0" width="10" height="14" fill="#8E9BA2"/><rect x="4" y="9.8" width="20" height="4.2" fill="#8E9BA2"/>
<rect x="0" y="16" width="30" height="14" fill="#9A86C8"/><path d="M3 28.5 V19 H7.4 Q9.9 19 9.9 21.5 Q9.9 24 7.4 24 H3 M13 28.5 V18.6 M19 28.5 V18.6 M13 23.2 H19 M23.1 28.5 V19 H27.5 Q30 19 30 21.5 Q30 24 27.5 24 H23.1" fill="none" stroke="#3A3148" stroke-width="1.9"/>
</svg>
<div class="t" style="left:159.0px;top:799.0px;font-size:25.5px;line-height:40px;color:#BBBBBB">member_view.php</div>
<svg style="left:122px;top:846px;overflow:hidden" width="30" height="30" viewBox="0 0 30 30">
<polygon points="4,7.8 12,0 12,7.8" fill="#8E9BA2"/><rect x="14" y="0" width="10" height="14" fill="#8E9BA2"/><rect x="4" y="9.8" width="20" height="4.2" fill="#8E9BA2"/>
<rect x="0" y="16" width="30" height="14" fill="#9A86C8"/><path d="M3 28.5 V19 H7.4 Q9.9 19 9.9 21.5 Q9.9 24 7.4 24 H3 M13 28.5 V18.6 M19 28.5 V18.6 M13 23.2 H19 M23.1 28.5 V19 H27.5 Q30 19 30 21.5 Q30 24 27.5 24 H23.1" fill="none" stroke="#3A3148" stroke-width="1.9"/>
</svg>
<div class="t" style="left:159.0px;top:839.0px;font-size:25.5px;line-height:40px;color:#BBBBBB">module_main.php</div>
<svg style="left:122px;top:886px;overflow:hidden" width="30" height="30" viewBox="0 0 30 30">
<polygon points="4,7.8 12,0 12,7.8" fill="#8E9BA2"/><rect x="14" y="0" width="10" height="14" fill="#8E9BA2"/><rect x="4" y="9.8" width="20" height="4.2" fill="#8E9BA2"/>
<rect x="0" y="16" width="30" height="14" fill="#9A86C8"/><path d="M3 28.5 V19 H7.4 Q9.9 19 9.9 21.5 Q9.9 24 7.4 24 H3 M13 28.5 V18.6 M19 28.5 V18.6 M13 23.2 H19 M23.1 28.5 V19 H27.5 Q30 19 30 21.5 Q30 24 27.5 24 H23.1" fill="none" stroke="#3A3148" stroke-width="1.9"/>
</svg>
<div class="t" style="left:159.0px;top:879.0px;font-size:25.5px;line-height:40px;color:#BBBBBB">module_make.php</div>
<svg style="left:122px;top:926px;overflow:hidden" width="30" height="30" viewBox="0 0 30 30">
<polygon points="4,7.8 12,0 12,7.8" fill="#8E9BA2"/><rect x="14" y="0" width="10" height="14" fill="#8E9BA2"/><rect x="4" y="9.8" width="20" height="4.2" fill="#8E9BA2"/>
<rect x="0" y="16" width="30" height="14" fill="#9A86C8"/><path d="M3 28.5 V19 H7.4 Q9.9 19 9.9 21.5 Q9.9 24 7.4 24 H3 M13 28.5 V18.6 M19 28.5 V18.6 M13 23.2 H19 M23.1 28.5 V19 H27.5 Q30 19 30 21.5 Q30 24 27.5 24 H23.1" fill="none" stroke="#3A3148" stroke-width="1.9"/>
</svg>
<div class="t" style="left:159.0px;top:919.0px;font-size:25.5px;line-height:40px;color:#BBBBBB">module_upload.php</div>
<svg style="left:122px;top:966px;overflow:hidden" width="30" height="30" viewBox="0 0 30 30">
<polygon points="4,7.8 12,0 12,7.8" fill="#8E9BA2"/><rect x="14" y="0" width="10" height="14" fill="#8E9BA2"/><rect x="4" y="9.8" width="20" height="4.2" fill="#8E9BA2"/>
<rect x="0" y="16" width="30" height="14" fill="#9A86C8"/><path d="M3 28.5 V19 H7.4 Q9.9 19 9.9 21.5 Q9.9 24 7.4 24 H3 M13 28.5 V18.6 M19 28.5 V18.6 M13 23.2 H19 M23.1 28.5 V19 H27.5 Q30 19 30 21.5 Q30 24 27.5 24 H23.1" fill="none" stroke="#3A3148" stroke-width="1.9"/>
</svg>
<div class="t" style="left:159.0px;top:959.0px;font-size:25.5px;line-height:40px;color:#BBBBBB">mychannel_add.php</div>
<svg style="left:122px;top:1006px;overflow:hidden" width="30" height="30" viewBox="0 0 30 30">
<polygon points="4,7.8 12,0 12,7.8" fill="#8E9BA2"/><rect x="14" y="0" width="10" height="14" fill="#8E9BA2"/><rect x="4" y="9.8" width="20" height="4.2" fill="#8E9BA2"/>
<rect x="0" y="16" width="30" height="14" fill="#9A86C8"/><path d="M3 28.5 V19 H7.4 Q9.9 19 9.9 21.5 Q9.9 24 7.4 24 H3 M13 28.5 V18.6 M19 28.5 V18.6 M13 23.2 H19 M23.1 28.5 V19 H27.5 Q30 19 30 21.5 Q30 24 27.5 24 H23.1" fill="none" stroke="#3A3148" stroke-width="1.9"/>
</svg>
<div class="t" style="left:159.0px;top:999.0px;font-size:25.5px;line-height:40px;color:#BBBBBB">mychannel_edit.php</div>
<svg style="left:122px;top:1046px;overflow:hidden" width="30" height="30" viewBox="0 0 30 30">
<polygon points="4,7.8 12,0 12,7.8" fill="#8E9BA2"/><rect x="14" y="0" width="10" height="14" fill="#8E9BA2"/><rect x="4" y="9.8" width="20" height="4.2" fill="#8E9BA2"/>
<rect x="0" y="16" width="30" height="14" fill="#9A86C8"/><path d="M3 28.5 V19 H7.4 Q9.9 19 9.9 21.5 Q9.9 24 7.4 24 H3 M13 28.5 V18.6 M19 28.5 V18.6 M13 23.2 H19 M23.1 28.5 V19 H27.5 Q30 19 30 21.5 Q30 24 27.5 24 H23.1" fill="none" stroke="#3A3148" stroke-width="1.9"/>
</svg>
<div class="t" style="left:159.0px;top:1039.0px;font-size:25.5px;line-height:40px;color:#BBBBBB">mychannel_field_add.php</div>
<svg style="left:122px;top:1086px;overflow:hidden" width="30" height="30" viewBox="0 0 30 30">
<polygon points="4,7.8 12,0 12,7.8" fill="#8E9BA2"/><rect x="14" y="0" width="10" height="14" fill="#8E9BA2"/><rect x="4" y="9.8" width="20" height="4.2" fill="#8E9BA2"/>
<rect x="0" y="16" width="30" height="14" fill="#9A86C8"/><path d="M3 28.5 V19 H7.4 Q9.9 19 9.9 21.5 Q9.9 24 7.4 24 H3 M13 28.5 V18.6 M19 28.5 V18.6 M13 23.2 H19 M23.1 28.5 V19 H27.5 Q30 19 30 21.5 Q30 24 27.5 24 H23.1" fill="none" stroke="#3A3148" stroke-width="1.9"/>
</svg>
<div class="t" style="left:159.0px;top:1079.0px;font-size:25.5px;line-height:40px;color:#BBBBBB">mychannel_field_edit.php</div>
<svg style="left:122px;top:1126px;overflow:hidden" width="30" height="30" viewBox="0 0 30 30">
<polygon points="4,7.8 12,0 12,7.8" fill="#8E9BA2"/><rect x="14" y="0" width="10" height="14" fill="#8E9BA2"/><rect x="4" y="9.8" width="20" height="4.2" fill="#8E9BA2"/>
<rect x="0" y="16" width="30" height="14" fill="#9A86C8"/><path d="M3 28.5 V19 H7.4 Q9.9 19 9.9 21.5 Q9.9 24 7.4 24 H3 M13 28.5 V18.6 M19 28.5 V18.6 M13 23.2 H19 M23.1 28.5 V19 H27.5 Q30 19 30 21.5 Q30 24 27.5 24 H23.1" fill="none" stroke="#3A3148" stroke-width="1.9"/>
</svg>
<div class="t" style="left:159.0px;top:1119.0px;font-size:25.5px;line-height:40px;color:#BBBBBB">mychannel_main.php</div>
<svg style="left:122px;top:1166px;overflow:hidden" width="30" height="30" viewBox="0 0 30 30">
<polygon points="4,7.8 12,0 12,7.8" fill="#8E9BA2"/><rect x="14" y="0" width="10" height="14" fill="#8E9BA2"/><rect x="4" y="9.8" width="20" height="4.2" fill="#8E9BA2"/>
<rect x="0" y="16" width="30" height="14" fill="#9A86C8"/><path d="M3 28.5 V19 H7.4 Q9.9 19 9.9 21.5 Q9.9 24 7.4 24 H3 M13 28.5 V18.6 M19 28.5 V18.6 M13 23.2 H19 M23.1 28.5 V19 H27.5 Q30 19 30 21.5 Q30 24 27.5 24 H23.1" fill="none" stroke="#3A3148" stroke-width="1.9"/>
</svg>
<div class="t" style="left:159.0px;top:1159.0px;font-size:25.5px;line-height:40px;color:#BBBBBB">mynews_add.php</div>
<svg style="left:122px;top:1206px;overflow:hidden" width="30" height="30" viewBox="0 0 30 30">
<polygon points="4,7.8 12,0 12,7.8" fill="#8E9BA2"/><rect x="14" y="0" width="10" height="14" fill="#8E9BA2"/><rect x="4" y="9.8" width="20" height="4.2" fill="#8E9BA2"/>
<rect x="0" y="16" width="30" height="14" fill="#9A86C8"/><path d="M3 28.5 V19 H7.4 Q9.9 19 9.9 21.5 Q9.9 24 7.4 24 H3 M13 28.5 V18.6 M19 28.5 V18.6 M13 23.2 H19 M23.1 28.5 V19 H27.5 Q30 19 30 21.5 Q30 24 27.5 24 H23.1" fill="none" stroke="#3A3148" stroke-width="1.9"/>
</svg>
<div class="t" style="left:159.0px;top:1199.0px;font-size:25.5px;line-height:40px;color:#BBBBBB">mynews_edit.php</div>
<svg style="left:122px;top:1246px;overflow:hidden" width="30" height="30" viewBox="0 0 30 30">
<polygon points="4,7.8 12,0 12,7.8" fill="#8E9BA2"/><rect x="14" y="0" width="10" height="14" fill="#8E9BA2"/><rect x="4" y="9.8" width="20" height="4.2" fill="#8E9BA2"/>
<rect x="0" y="16" width="30" height="14" fill="#9A86C8"/><path d="M3 28.5 V19 H7.4 Q9.9 19 9.9 21.5 Q9.9 24 7.4 24 H3 M13 28.5 V18.6 M19 28.5 V18.6 M13 23.2 H19 M23.1 28.5 V19 H27.5 Q30 19 30 21.5 Q30 24 27.5 24 H23.1" fill="none" stroke="#3A3148" stroke-width="1.9"/>
</svg>
<div class="t" style="left:159.0px;top:1239.0px;font-size:25.5px;line-height:40px;color:#BBBBBB">mynews_main.php</div>
<svg style="left:122px;top:1286px;overflow:hidden" width="30" height="30" viewBox="0 0 30 30">
<polygon points="4,7.8 12,0 12,7.8" fill="#8E9BA2"/><rect x="14" y="0" width="10" height="14" fill="#8E9BA2"/><rect x="4" y="9.8" width="20" height="4.2" fill="#8E9BA2"/>
<rect x="0" y="16" width="30" height="14" fill="#9A86C8"/><path d="M3 28.5 V19 H7.4 Q9.9 19 9.9 21.5 Q9.9 24 7.4 24 H3 M13 28.5 V18.6 M19 28.5 V18.6 M13 23.2 H19 M23.1 28.5 V19 H27.5 Q30 19 30 21.5 Q30 24 27.5 24 H23.1" fill="none" stroke="#3A3148" stroke-width="1.9"/>
</svg>
<div class="t" style="left:159.0px;top:1279.0px;font-size:25.5px;line-height:40px;color:#BBBBBB">mytag_add.php</div>
<svg style="left:122px;top:1326px;overflow:hidden" width="30" height="30" viewBox="0 0 30 30">
<polygon points="4,7.8 12,0 12,7.8" fill="#8E9BA2"/><rect x="14" y="0" width="10" height="14" fill="#8E9BA2"/><rect x="4" y="9.8" width="20" height="4.2" fill="#8E9BA2"/>
<rect x="0" y="16" width="30" height="14" fill="#9A86C8"/><path d="M3 28.5 V19 H7.4 Q9.9 19 9.9 21.5 Q9.9 24 7.4 24 H3 M13 28.5 V18.6 M19 28.5 V18.6 M13 23.2 H19 M23.1 28.5 V19 H27.5 Q30 19 30 21.5 Q30 24 27.5 24 H23.1" fill="none" stroke="#3A3148" stroke-width="1.9"/>
</svg>
<div class="t" style="left:159.0px;top:1319.0px;font-size:25.5px;line-height:40px;color:#BBBBBB">mytag_edit.php</div>
<svg style="left:122px;top:1366px;overflow:hidden" width="30" height="30" viewBox="0 0 30 30">
<polygon points="4,7.8 12,0 12,7.8" fill="#8E9BA2"/><rect x="14" y="0" width="10" height="14" fill="#8E9BA2"/><rect x="4" y="9.8" width="20" height="4.2" fill="#8E9BA2"/>
<rect x="0" y="16" width="30" height="14" fill="#9A86C8"/><path d="M3 28.5 V19 H7.4 Q9.9 19 9.9 21.5 Q9.9 24 7.4 24 H3 M13 28.5 V18.6 M19 28.5 V18.6 M13 23.2 H19 M23.1 28.5 V19 H27.5 Q30 19 30 21.5 Q30 24 27.5 24 H23.1" fill="none" stroke="#3A3148" stroke-width="1.9"/>
</svg>
<div class="t" style="left:159.0px;top:1359.0px;font-size:25.5px;line-height:40px;color:#BBBBBB">mytag_main.php</div>
<svg style="left:122px;top:1406px;overflow:hidden" width="30" height="30" viewBox="0 0 30 30">
<polygon points="4,7.8 12,0 12,7.8" fill="#8E9BA2"/><rect x="14" y="0" width="10" height="14" fill="#8E9BA2"/><rect x="4" y="9.8" width="20" height="4.2" fill="#8E9BA2"/>
<rect x="0" y="16" width="30" height="14" fill="#9A86C8"/><path d="M3 28.5 V19 H7.4 Q9.9 19 9.9 21.5 Q9.9 24 7.4 24 H3 M13 28.5 V18.6 M19 28.5 V18.6 M13 23.2 H19 M23.1 28.5 V19 H27.5 Q30 19 30 21.5 Q30 24 27.5 24 H23.1" fill="none" stroke="#3A3148" stroke-width="1.9"/>
</svg>
<div class="t" style="left:159.0px;top:1399.0px;font-size:25.5px;line-height:40px;color:#BBBBBB">mytag_tag_guide.php</div>
<svg style="left:122px;top:1446px;overflow:hidden" width="30" height="30" viewBox="0 0 30 30">
<polygon points="4,7.8 12,0 12,7.8" fill="#8E9BA2"/><rect x="14" y="0" width="10" height="14" fill="#8E9BA2"/><rect x="4" y="9.8" width="20" height="4.2" fill="#8E9BA2"/>
<rect x="0" y="16" width="30" height="14" fill="#9A86C8"/><path d="M3 28.5 V19 H7.4 Q9.9 19 9.9 21.5 Q9.9 24 7.4 24 H3 M13 28.5 V18.6 M19 28.5 V18.6 M13 23.2 H19 M23.1 28.5 V19 H27.5 Q30 19 30 21.5 Q30 24 27.5 24 H23.1" fill="none" stroke="#3A3148" stroke-width="1.9"/>
</svg>
<div class="t" style="left:159.0px;top:1439.0px;font-size:25.5px;line-height:40px;color:#BBBBBB">mytag_tag_guide_ok.php</div>
<svg style="left:122px;top:1486px;overflow:hidden" width="30" height="30" viewBox="0 0 30 30">
<polygon points="4,7.8 12,0 12,7.8" fill="#8E9BA2"/><rect x="14" y="0" width="10" height="14" fill="#8E9BA2"/><rect x="4" y="9.8" width="20" height="4.2" fill="#8E9BA2"/>
<rect x="0" y="16" width="30" height="14" fill="#9A86C8"/><path d="M3 28.5 V19 H7.4 Q9.9 19 9.9 21.5 Q9.9 24 7.4 24 H3 M13 28.5 V18.6 M19 28.5 V18.6 M13 23.2 H19 M23.1 28.5 V19 H27.5 Q30 19 30 21.5 Q30 24 27.5 24 H23.1" fill="none" stroke="#3A3148" stroke-width="1.9"/>
</svg>
<div class="t" style="left:159.0px;top:1479.0px;font-size:25.5px;line-height:40px;color:#BBBBBB">pic_view.php</div>
<svg style="left:122px;top:1526px;overflow:hidden" width="30" height="30" viewBox="0 0 30 30">
<polygon points="4,7.8 12,0 12,7.8" fill="#8E9BA2"/><rect x="14" y="0" width="10" height="14" fill="#8E9BA2"/><rect x="4" y="9.8" width="20" height="4.2" fill="#8E9BA2"/>
<rect x="0" y="16" width="30" height="14" fill="#9A86C8"/><path d="M3 28.5 V19 H7.4 Q9.9 19 9.9 21.5 Q9.9 24 7.4 24 H3 M13 28.5 V18.6 M19 28.5 V18.6 M13 23.2 H19 M23.1 28.5 V19 H27.5 Q30 19 30 21.5 Q30 24 27.5 24 H23.1" fill="none" stroke="#3A3148" stroke-width="1.9"/>
</svg>
<div class="t" style="left:159.0px;top:1519.0px;font-size:25.5px;line-height:40px;color:#BBBBBB">plus_edit.php</div>
<svg style="left:122px;top:1566px;overflow:hidden" width="30" height="30" viewBox="0 0 30 30">
<polygon points="4,7.8 12,0 12,7.8" fill="#8E9BA2"/><rect x="14" y="0" width="10" height="14" fill="#8E9BA2"/><rect x="4" y="9.8" width="20" height="4.2" fill="#8E9BA2"/>
<rect x="0" y="16" width="30" height="14" fill="#9A86C8"/><path d="M3 28.5 V19 H7.4 Q9.9 19 9.9 21.5 Q9.9 24 7.4 24 H3 M13 28.5 V18.6 M19 28.5 V18.6 M13 23.2 H19 M23.1 28.5 V19 H27.5 Q30 19 30 21.5 Q30 24 27.5 24 H23.1" fill="none" stroke="#3A3148" stroke-width="1.9"/>
</svg>
<div class="t" style="left:159.0px;top:1559.0px;font-size:25.5px;line-height:40px;color:#BBBBBB">plus_main.php</div>
<svg style="left:122px;top:1606px;overflow:hidden" width="30" height="30" viewBox="0 0 30 30">
<polygon points="4,7.8 12,0 12,7.8" fill="#8E9BA2"/><rect x="14" y="0" width="10" height="14" fill="#8E9BA2"/><rect x="4" y="9.8" width="20" height="4.2" fill="#8E9BA2"/>
<rect x="0" y="16" width="30" height="14" fill="#9A86C8"/><path d="M3 28.5 V19 H7.4 Q9.9 19 9.9 21.5 Q9.9 24 7.4 24 H3 M13 28.5 V18.6 M19 28.5 V18.6 M13 23.2 H19 M23.1 28.5 V19 H27.5 Q30 19 30 21.5 Q30 24 27.5 24 H23.1" fill="none" stroke="#3A3148" stroke-width="1.9"/>
</svg>
<div class="t" style="left:159.0px;top:1599.0px;font-size:25.5px;line-height:40px;color:#BBBBBB">public_guide.php</div>
<svg style="left:122px;top:1646px;overflow:hidden" width="30" height="30" viewBox="0 0 30 30">
<polygon points="4,7.8 12,0 12,7.8" fill="#8E9BA2"/><rect x="14" y="0" width="10" height="14" fill="#8E9BA2"/><rect x="4" y="9.8" width="20" height="4.2" fill="#8E9BA2"/>
<rect x="0" y="16" width="30" height="14" fill="#9A86C8"/><path d="M3 28.5 V19 H7.4 Q9.9 19 9.9 21.5 Q9.9 24 7.4 24 H3 M13 28.5 V18.6 M19 28.5 V18.6 M13 23.2 H19 M23.1 28.5 V19 H27.5 Q30 19 30 21.5 Q30 24 27.5 24 H23.1" fill="none" stroke="#3A3148" stroke-width="1.9"/>
</svg>
<div class="t" style="left:159.0px;top:1639.0px;font-size:25.5px;line-height:40px;color:#BBBBBB">recycling.php</div>
<svg style="left:122px;top:1686px;overflow:hidden" width="30" height="30" viewBox="0 0 30 30">
<polygon points="4,7.8 12,0 12,7.8" fill="#8E9BA2"/><rect x="14" y="0" width="10" height="14" fill="#8E9BA2"/><rect x="4" y="9.8" width="20" height="4.2" fill="#8E9BA2"/>
<rect x="0" y="16" width="30" height="14" fill="#9A86C8"/><path d="M3 28.5 V19 H7.4 Q9.9 19 9.9 21.5 Q9.9 24 7.4 24 H3 M13 28.5 V18.6 M19 28.5 V18.6 M13 23.2 H19 M23.1 28.5 V19 H27.5 Q30 19 30 21.5 Q30 24 27.5 24 H23.1" fill="none" stroke="#3A3148" stroke-width="1.9"/>
</svg>
<div class="t" style="left:159.0px;top:1679.0px;font-size:25.5px;line-height:40px;color:#BBBBBB">search_keywords_main.php</div>
<svg style="left:122px;top:1726px;overflow:hidden" width="30" height="30" viewBox="0 0 30 30">
<polygon points="4,7.8 12,0 12,7.8" fill="#8E9BA2"/><rect x="14" y="0" width="10" height="14" fill="#8E9BA2"/><rect x="4" y="9.8" width="20" height="4.2" fill="#8E9BA2"/>
<rect x="0" y="16" width="30" height="14" fill="#9A86C8"/><path d="M3 28.5 V19 H7.4 Q9.9 19 9.9 21.5 Q9.9 24 7.4 24 H3 M13 28.5 V18.6 M19 28.5 V18.6 M13 23.2 H19 M23.1 28.5 V19 H27.5 Q30 19 30 21.5 Q30 24 27.5 24 H23.1" fill="none" stroke="#3A3148" stroke-width="1.9"/>
</svg>
<div class="t" style="left:159.0px;top:1719.0px;font-size:25.5px;line-height:40px;color:#BBBBBB">soft_config.php</div>
<div class="ab" style="left:626px;top:784px;width:16px;height:230px;background:rgba(140,140,142,0.39);"></div>
</div>
<div class="ab" style="left:688px;top:116px;width:2px;height:54px;background:#2B2B2B;"></div>
<div class="ab" style="left:688px;top:170px;width:2px;height:1730px;background:#2F3031;"></div>
<div class="ab" style="left:690px;top:168px;width:2391px;height:2px;background:#323232;"></div>
<div class="ab" style="left:690px;top:116px;width:332px;height:48px;background:#4E5254;"></div>
<div class="ab" style="left:690px;top:164px;width:332px;height:6px;background:#4A88C7;"></div>
<svg style="left:708px;top:128px;overflow:hidden" width="30" height="30" viewBox="0 0 30 30">
<polygon points="4,7.8 12,0 12,7.8" fill="#8E9BA2"/><rect x="14" y="0" width="10" height="14" fill="#8E9BA2"/><rect x="4" y="9.8" width="20" height="4.2" fill="#8E9BA2"/>
<rect x="0" y="16" width="30" height="14" fill="#9A86C8"/><path d="M3 28.5 V19 H7.4 Q9.9 19 9.9 21.5 Q9.9 24 7.4 24 H3 M13 28.5 V18.6 M19 28.5 V18.6 M13 23.2 H19 M23.1 28.5 V19 H27.5 Q30 19 30 21.5 Q30 24 27.5 24 H23.1" fill="none" stroke="#3A3148" stroke-width="1.9"/>
</svg>
<div class="t" style="left:746.0px;top:123.3px;font-size:25.5px;line-height:40px;color:#DFDFDF;font-weight:normal;">mychannel_add.php</div>
<svg style="left:988px;top:133px" width="18" height="18"><path d="M2 2 L16 16 M16 2 L2 16" stroke="#6E7072" stroke-width="1.8"/></svg>
<svg style="left:3050px;top:128px" width="12" height="28"><circle cx="6" cy="3" r="3" fill="#AFB1B3"/><circle cx="6" cy="13" r="3" fill="#AFB1B3"/><circle cx="6" cy="23" r="3" fill="#AFB1B3"/></svg>
<div class="ab" style="left:690px;top:170px;width:184px;height:1682px;background:#313335;"></div>
<div class="ab" style="left:859px;top:170px;width:15px;height:1682px;background:#282828;"></div>
<div class="ab" style="left:874px;top:170px;width:2207px;height:1682px;background:#222424;"></div>
<div class="ab" style="left:859px;top:914px;width:2222px;height:62px;background:#323232;"></div>
<div class="ab" style="left:1688px;top:852px;width:484px;height:62px;background:#52503A;"></div>
<div class="ab" style="left:2458px;top:852px;width:44px;height:62px;background:#52503A;"></div>
<div class="ab" style="left:1468px;top:1038px;width:308px;height:62px;background:#52503A;"></div>
<div class="ab" style="left:2018px;top:1038px;width:1063px;height:62px;background:#52503A;"></div>
<div class="ab" style="left:874px;top:1100px;width:2207px;height:310px;background:#52503A;"></div>
<div class="ab" style="left:874px;top:1410px;width:242px;height:62px;background:#52503A;"></div>
<div class="ab" style="left:1490px;top:1658px;width:308px;height:62px;background:#52503A;"></div>
<div class="ab" style="left:2040px;top:1658px;width:1041px;height:62px;background:#52503A;"></div>
<div class="ab" style="left:874px;top:1720px;width:2207px;height:132px;background:#52503A;"></div>
<div class="ab" style="left:1182px;top:914px;width:22px;height:62px;background:#3B514D;"></div>
<div class="ab" style="left:1534px;top:914px;width:22px;height:62px;background:#3B514D;"></div>
<div class="ab" style="left:957px;top:480px;width:2px;height:1372px;background:#3A3C3C;"></div>
<div class="ab" style="left:1045px;top:728px;width:2px;height:1124px;background:#3A3C3C;"></div>
<div class="ab" style="left:1133px;top:1038px;width:2px;height:372px;background:#3A3C3C;"></div>
<div class="ab" style="left:1221px;top:1100px;width:2px;height:310px;background:#3A3C3C;"></div>
<div class="ab" style="left:1133px;top:1658px;width:2px;height:194px;background:#3A3C3C;"></div>
<div class="ab" style="left:1243px;top:1720px;width:2px;height:132px;background:#3A3C3C;"></div>
<div class="ab" style="left:957px;top:1100px;width:2px;height:372px;background:#3D3C30;"></div>
<div class="ab" style="left:1045px;top:1100px;width:2px;height:372px;background:#3D3C30;"></div>
<div class="ab" style="left:1133px;top:1100px;width:2px;height:310px;background:#3D3C30;"></div>
<div class="ab" style="left:1221px;top:1100px;width:2px;height:310px;background:#3D3C30;"></div>
<div class="ab" style="left:957px;top:1720px;width:2px;height:132px;background:#3D3C30;"></div>
<div class="ab" style="left:1045px;top:1720px;width:2px;height:132px;background:#3D3C30;"></div>
<div class="ab" style="left:1133px;top:1720px;width:2px;height:132px;background:#3D3C30;"></div>
<div class="ab" style="left:1243px;top:1720px;width:2px;height:132px;background:#3D3C30;"></div>
<div class="code" style="top:170px;left:962px"><span class="v">$mysql_version</span><span class="o"> = </span><span class="v">$dsql</span><span class="o">-&gt;</span><span class="f">GetVersion</span><span class="o">()</span><span class="k">;</span></div>
<div class="code" style="top:232px;left:874px"></div>
<div class="code" style="top:294px;left:962px"><span class="c">//</span><span style="display:inline-block;width:36.67px;height:62px;vertical-align:top;position:relative"><svg style="position:absolute;left:2px;top:12.5px" width="33" height="34" viewBox="0 0 100 100" fill="none" stroke="#808080" stroke-width="4.8" stroke-linecap="square"><path d="M30 5 L3 45"/><path d="M30 5 L62 40"/><path d="M15 45 L45 45 L45 72 L38 66"/><path d="M15 45 L15 90 L62 90 L62 78"/><path d="M72 20 L72 72"/><path d="M92 5 L92 95 L82 88"/></svg></span><span style="display:inline-block;width:36.67px;height:62px;vertical-align:top;position:relative"><svg style="position:absolute;left:2px;top:12.5px" width="33" height="34" viewBox="0 0 100 100" fill="none" stroke="#808080" stroke-width="4.8" stroke-linecap="square"><path d="M5 28 L25 28 L8 58 L26 58 L14 80"/><path d="M10 74 Q30 92 97 94"/><path d="M36 15 L84 15"/><path d="M30 30 L96 30"/><path d="M36 45 L84 45"/><path d="M32 60 L94 60"/><path d="M36 75 L84 75"/><path d="M60 3 L60 88"/><path d="M84 15 L84 45"/></svg></span><span style="display:inline-block;width:36.67px;height:62px;vertical-align:top;position:relative"><svg style="position:absolute;left:2px;top:12.5px" width="33" height="34" viewBox="0 0 100 100" fill="none" stroke="#808080" stroke-width="4.8" stroke-linecap="square"><path d="M10 5 L10 97"/><path d="M10 8 L32 8 L20 35 L32 56 L18 68"/><path d="M52 5 L38 45"/><path d="M45 30 L45 97"/><path d="M55 35 L98 35"/><path d="M85 5 L85 95 L76 88"/><path d="M64 52 L72 68"/></svg></span><span style="display:inline-block;width:36.67px;height:62px;vertical-align:top;position:relative"><svg style="position:absolute;left:2px;top:12.5px" width="33" height="34" viewBox="0 0 100 100" fill="none" stroke="#808080" stroke-width="4.8" stroke-linecap="square"><path d="M3 30 L45 30 L42 90 L34 84"/><path d="M25 5 L25 40 Q22 75 5 95"/><path d="M58 25 L95 25 L95 90 L58 90 Z"/></svg></span><span style="display:inline-block;width:36.67px;height:62px;vertical-align:top;position:relative"><svg style="position:absolute;left:2px;top:12.5px" width="33" height="34" viewBox="0 0 100 100" fill="none" stroke="#808080" stroke-width="4.8" stroke-linecap="square"><path d="M15 15 L85 15"/><path d="M20 33 L80 33"/><path d="M6 52 L96 52"/><path d="M50 3 L50 52"/><path d="M45 54 L12 84"/><path d="M30 70 L30 97 L56 82"/><path d="M52 56 Q70 85 97 95"/><path d="M86 60 L64 76"/></svg></span></div>
<div class="code" style="top:356px;left:962px"><span class="k">if</span><span class="o">(</span><span class="v">$trueTable2</span><span class="o">!=</span><span class="s">&#x27;&#x27;</span><span class="o">)</span></div>
<div class="code" style="top:418px;left:962px"><span class="o">{</span></div>
<div class="code" style="top:480px;left:1050px"><span class="v">$istb</span><span class="o"> = </span><span class="v">$dsql</span><span class="o">-&gt;</span><span class="f">IsTable</span><span class="o">(</span><span class="v">$trueTable2</span><span class="o">)</span><span class="k">;</span></div>
<div class="code" style="top:542px;left:1050px"><span class="k">echo </span><span class="s">&quot;istb=&quot;</span><span class="o">.</span><span class="v">$istb</span><span class="k">;</span></div>
<div class="code" style="top:604px;left:1050px"><span class="k">if</span><span class="o">(!</span><span class="v">$istb</span><span class="o"> || </span><span class="v">$isdel</span><span class="o">==</span><span class="n">1</span><span class="o">)</span></div>
<div class="code" style="top:666px;left:1050px"><span class="o">{</span></div>
<div class="code" style="top:728px;left:1138px"><span class="k">echo </span><span class="s">&quot;</span><span style="display:inline-block;width:36.67px;height:62px;vertical-align:top;position:relative"><svg style="position:absolute;left:2px;top:12.5px" width="33" height="34" viewBox="0 0 100 100" fill="none" stroke="#6A8759" stroke-width="4.8" stroke-linecap="square"><path d="M25 5 L75 5 L75 40 L25 40 Z"/><path d="M25 22 L75 22"/><path d="M5 52 L95 52"/><path d="M50 52 L50 86"/><path d="M50 68 L80 68"/><path d="M28 62 L8 95"/><path d="M26 80 Q45 95 98 96"/></svg></span><span style="display:inline-block;width:36.67px;height:62px;vertical-align:top;position:relative"><svg style="position:absolute;left:2px;top:12.5px" width="33" height="34" viewBox="0 0 100 100" fill="none" stroke="#6A8759" stroke-width="4.8" stroke-linecap="square"><path d="M5 10 L95 10"/><path d="M55 10 L10 52"/><path d="M50 25 L50 55"/><path d="M64 30 L86 46"/><path d="M22 62 L78 62 L78 97 L22 97 Z"/></svg></span><span style="display:inline-block;width:36.67px;height:62px;vertical-align:top;position:relative"><svg style="position:absolute;left:2px;top:12.5px" width="33" height="34" viewBox="0 0 100 100" fill="none" stroke="#6A8759" stroke-width="4.8" stroke-linecap="square"><path d="M10 4 L90 4"/><path d="M8 16 L92 16 L92 46 L86 42"/><path d="M8 16 L8 46"/><path d="M50 4 L50 46"/><path d="M24 26 L36 30"/><path d="M24 37 L36 41"/><path d="M64 26 L76 30"/><path d="M64 37 L76 41"/><path d="M5 56 L95 56"/><path d="M42 56 L32 68"/><path d="M15 68 L85 68 L85 97"/><path d="M15 68 L15 97"/><path d="M40 68 L40 97"/><path d="M60 68 L60 97"/></svg></span><span style="display:inline-block;width:36.67px;height:62px;vertical-align:top;position:relative"><svg style="position:absolute;left:2px;top:12.5px" width="33" height="34" viewBox="0 0 100 100" fill="none" stroke="#6A8759" stroke-width="4.8" stroke-linecap="square"><path d="M5 8 L95 8"/><path d="M15 20 L85 20 L85 46 L15 46 Z"/><path d="M38 8 L38 46"/><path d="M62 8 L62 46"/><path d="M5 66 L95 66"/><path d="M42 52 L26 76 L76 96"/><path d="M72 66 Q62 88 14 97"/></svg></span><span style="display:inline-block;width:36.67px;height:62px;vertical-align:top;position:relative"><svg style="position:absolute;left:2px;top:12.5px" width="33" height="34" viewBox="0 0 100 100" fill="none" stroke="#6A8759" stroke-width="4.8" stroke-linecap="square"><path d="M3 30 L30 30"/><path d="M18 5 L18 94 L10 88"/><path d="M3 72 L30 56"/><path d="M66 2 L68 10"/><path d="M38 13 L96 13"/><path d="M52 16 L56 26"/><path d="M82 16 L76 26"/><path d="M40 29 L96 29"/><path d="M42 40 L93 40 L93 97 L86 92"/><path d="M42 40 L42 97"/><path d="M55 55 L80 55"/><path d="M67 44 L67 72"/><path d="M55 72 L80 72 L80 88 L55 88 Z"/></svg></span><span style="display:inline-block;width:36.67px;height:62px;vertical-align:top;position:relative"><svg style="position:absolute;left:2px;top:12.5px" width="33" height="34" viewBox="0 0 100 100" fill="none" stroke="#6A8759" stroke-width="4.8" stroke-linecap="square"><path d="M5 8 L95 8"/><path d="M15 20 L85 20 L85 46 L15 46 Z"/><path d="M38 8 L38 46"/><path d="M62 8 L62 46"/><path d="M5 66 L95 66"/><path d="M42 52 L26 76 L76 96"/><path d="M72 66 Q62 88 14 97"/></svg></span><span style="display:inline-block;width:36.67px;height:62px;vertical-align:top;position:relative"><svg style="position:absolute;left:2px;top:12.5px" width="33" height="34" viewBox="0 0 100 100" fill="none" stroke="#6A8759" stroke-width="4.8" stroke-linecap="square"><path d="M50 2 L53 12"/><path d="M8 30 L8 18 L92 18 L88 30"/><path d="M26 40 L74 40 L50 56"/><path d="M50 56 L50 95 L40 89"/><path d="M5 66 L95 66"/></svg></span><span style="display:inline-block;width:36.67px;height:62px;vertical-align:top;position:relative"><svg style="position:absolute;left:2px;top:12.5px" width="33" height="34" viewBox="0 0 100 100" fill="none" stroke="#6A8759" stroke-width="4.8" stroke-linecap="square"><path d="M10 16 L40 6"/><path d="M12 16 L12 80 L5 97"/><path d="M12 36 L40 36"/><path d="M12 55 L40 55"/><path d="M3 76 L42 66"/><path d="M55 10 L55 34 L48 46"/><path d="M55 10 L84 10 L84 34 L96 38"/><path d="M54 54 L88 54 Q78 80 56 96"/><path d="M62 66 L97 97"/></svg></span><span class="s">&quot;</span><span class="k">;</span></div>
<div class="code" style="top:790px;left:1138px"><span class="c">//</span><span style="display:inline-block;width:36.67px;height:62px;vertical-align:top;position:relative"><svg style="position:absolute;left:2px;top:12.5px" width="33" height="34" viewBox="0 0 100 100" fill="none" stroke="#808080" stroke-width="4.8" stroke-linecap="square"><path d="M25 5 L75 5 L75 40 L25 40 Z"/><path d="M25 22 L75 22"/><path d="M5 52 L95 52"/><path d="M50 52 L50 86"/><path d="M50 68 L80 68"/><path d="M28 62 L8 95"/><path d="M26 80 Q45 95 98 96"/></svg></span><span style="display:inline-block;width:36.67px;height:62px;vertical-align:top;position:relative"><svg style="position:absolute;left:2px;top:12.5px" width="33" height="34" viewBox="0 0 100 100" fill="none" stroke="#808080" stroke-width="4.8" stroke-linecap="square"><path d="M5 10 L95 10"/><path d="M55 10 L10 52"/><path d="M50 25 L50 55"/><path d="M64 30 L86 46"/><path d="M22 62 L78 62 L78 97 L22 97 Z"/></svg></span><span style="display:inline-block;width:36.67px;height:62px;vertical-align:top;position:relative"><svg style="position:absolute;left:2px;top:12.5px" width="33" height="34" viewBox="0 0 100 100" fill="none" stroke="#808080" stroke-width="4.8" stroke-linecap="square"><path d="M10 4 L90 4"/><path d="M8 16 L92 16 L92 46 L86 42"/><path d="M8 16 L8 46"/><path d="M50 4 L50 46"/><path d="M24 26 L36 30"/><path d="M24 37 L36 41"/><path d="M64 26 L76 30"/><path d="M64 37 L76 41"/><path d="M5 56 L95 56"/><path d="M42 56 L32 68"/><path d="M15 68 L85 68 L85 97"/><path d="M15 68 L15 97"/><path d="M40 68 L40 97"/><path d="M60 68 L60 97"/></svg></span><span style="display:inline-block;width:36.67px;height:62px;vertical-align:top;position:relative"><svg style="position:absolute;left:2px;top:12.5px" width="33" height="34" viewBox="0 0 100 100" fill="none" stroke="#808080" stroke-width="4.8" stroke-linecap="square"><path d="M5 8 L95 8"/><path d="M15 20 L85 20 L85 46 L15 46 Z"/><path d="M38 8 L38 46"/><path d="M62 8 L62 46"/><path d="M5 66 L95 66"/><path d="M42 52 L26 76 L76 96"/><path d="M72 66 Q62 88 14 97"/></svg></span><span style="display:inline-block;width:36.67px;height:62px;vertical-align:top;position:relative"><svg style="position:absolute;left:2px;top:12.5px" width="33" height="34" viewBox="0 0 100 100" fill="none" stroke="#808080" stroke-width="4.8" stroke-linecap="square"><path d="M3 30 L30 30"/><path d="M18 5 L18 94 L10 88"/><path d="M3 72 L30 56"/><path d="M66 2 L68 10"/><path d="M38 13 L96 13"/><path d="M52 16 L56 26"/><path d="M82 16 L76 26"/><path d="M40 29 L96 29"/><path d="M42 40 L93 40 L93 97 L86 92"/><path d="M42 40 L42 97"/><path d="M55 55 L80 55"/><path d="M67 44 L67 72"/><path d="M55 72 L80 72 L80 88 L55 88 Z"/></svg></span><span style="display:inline-block;width:36.67px;height:62px;vertical-align:top;position:relative"><svg style="position:absolute;left:2px;top:12.5px" width="33" height="34" viewBox="0 0 100 100" fill="none" stroke="#808080" stroke-width="4.8" stroke-linecap="square"><path d="M5 8 L95 8"/><path d="M15 20 L85 20 L85 46 L15 46 Z"/><path d="M38 8 L38 46"/><path d="M62 8 L62 46"/><path d="M5 66 L95 66"/><path d="M42 52 L26 76 L76 96"/><path d="M72 66 Q62 88 14 97"/></svg></span><span style="display:inline-block;width:36.67px;height:62px;vertical-align:top;position:relative"><svg style="position:absolute;left:2px;top:12.5px" width="33" height="34" viewBox="0 0 100 100" fill="none" stroke="#808080" stroke-width="4.8" stroke-linecap="square"><path d="M50 2 L53 12"/><path d="M8 30 L8 18 L92 18 L88 30"/><path d="M26 40 L74 40 L50 56"/><path d="M50 56 L50 95 L40 89"/><path d="M5 66 L95 66"/></svg></span><span style="display:inline-block;width:36.67px;height:62px;vertical-align:top;position:relative"><svg style="position:absolute;left:2px;top:12.5px" width="33" height="34" viewBox="0 0 100 100" fill="none" stroke="#808080" stroke-width="4.8" stroke-linecap="square"><path d="M10 16 L40 6"/><path d="M12 16 L12 80 L5 97"/><path d="M12 36 L40 36"/><path d="M12 55 L40 55"/><path d="M3 76 L42 66"/><path d="M55 10 L55 34 L48 46"/><path d="M55 10 L84 10 L84 34 L96 38"/><path d="M54 54 L88 54 Q78 80 56 96"/><path d="M62 66 L97 97"/></svg></span></div>
<div class="code" style="top:852px;left:1138px"><span class="v">$dsql</span><span class="o">-&gt;</span><span class="f">ExecuteNoneQuery</span><span class="o">(</span><span class="s">&quot;</span><span class="k">DROP TABLE </span><span class="o">IF</span><span class="k"> EXISTS </span><span class="o">`</span><span class="g">{</span><span class="v">$trueTable2</span><span class="g">}</span><span class="o">`</span><span class="k">;</span><span class="s">&quot;</span><span class="o">)</span><span class="k">;</span></div>
<div class="code" style="top:914px;left:1138px"><span class="k">if</span><span class="bm">(</span><span class="v">$issystem</span><span class="o"> != -</span><span class="n">1</span><span class="bm">)</span></div>
<div class="code" style="top:976px;left:1138px"><span class="o">{</span></div>
<div class="code" style="top:1038px;left:1226px"><span class="v">$tabsql</span><span class="o"> = </span><span class="s">&quot;</span><span class="k">CREATE TABLE </span><span class="o">`</span><span class="v">$trueTable2</span><span class="o">`(</span></div>
<div class="code" style="top:1100px;left:1358px"><span class="o">`</span><span class="v">aid</span><span class="o">`</span><span class="k"> int</span><span class="o">(</span><span class="n">11</span><span class="o">)</span><span class="k"> NOT NULL default </span><span class="s">&#x27;0&#x27;</span><span class="k">,</span></div>
<div class="code" style="top:1162px;left:1314px"><span class="o">`</span><span class="v">typeid</span><span class="o">`</span><span class="k"> int</span><span class="o">(</span><span class="n">11</span><span class="o">)</span><span class="k"> NOT NULL default </span><span class="s">&#x27;0&#x27;</span><span class="k">,</span></div>
<div class="code" style="top:1224px;left:1314px"><span class="o">`</span><span class="v">redirecturl</span><span class="o">`</span><span class="k"> varchar</span><span class="o">(</span><span class="n">255</span><span class="o">)</span><span class="k"> NOT NULL default </span><span class="s">&#x27;&#x27;</span><span class="k">,</span></div>
<div class="code" style="top:1286px;left:1314px"><span class="o">`</span><span class="v">templet</span><span class="o">`</span><span class="k"> varchar</span><span class="o">(</span><span class="n">30</span><span class="o">)</span><span class="k"> NOT NULL default </span><span class="s">&#x27;&#x27;</span><span class="k">,</span></div>
<div class="code" style="top:1348px;left:1314px"><span class="o">`</span><span class="v">userip</span><span class="o">`</span><span class="k"> char</span><span class="o">(</span><span class="n">15</span><span class="o">)</span><span class="k"> NOT NULL default </span><span class="s">&#x27;&#x27;</span><span class="k">,</span></div>
<div class="code" style="top:1410px;left:1116px"><span class="s">&quot;</span><span class="k">;</span></div>
<div class="code" style="top:1472px;left:1138px"><span class="o">}</span></div>
<div class="code" style="top:1534px;left:1138px"><span class="k">else</span></div>
<div class="code" style="top:1596px;left:1138px"><span class="o">{</span></div>
<div class="code" style="top:1658px;left:1248px"><span class="v">$tabsql</span><span class="o"> = </span><span class="s">&quot;</span><span class="k">CREATE TABLE </span><span class="o">`</span><span class="v">$trueTable2</span><span class="o">`(</span></div>
<div class="code" style="top:1720px;left:1358px"><span class="o">`</span><span class="v">aid</span><span class="o">`</span><span class="k"> int</span><span class="o">(</span><span class="n">11</span><span class="o">)</span><span class="k"> NOT NULL default </span><span class="s">&#x27;0&#x27;</span><span class="k">,</span></div>
<div class="code" style="top:1782px;left:1314px"><span class="o">`</span><span class="v">typeid</span><span class="o">`</span><span class="k"> int</span><span class="o">(</span><span class="n">11</span><span class="o">)</span><span class="k"> NOT NULL default </span><span class="s">&#x27;0&#x27;</span><span class="k">,</span></div>
<svg style="left:1072px;top:529px" width="90" height="7"><polyline points="0.0,1.0 4.0,5.0 8.0,1.0 12.0,5.0 16.0,1.0 20.0,5.0 24.0,1.0 28.0,5.0 32.0,1.0 36.0,5.0 40.0,1.0 44.0,5.0 48.0,1.0 52.0,5.0 56.0,1.0 60.0,5.0 64.0,1.0 68.0,5.0 72.0,1.0 76.0,5.0 80.0,1.0 84.0,5.0 88.0,1.0" fill="none" stroke="#5A9A5A" stroke-width="1.6"/></svg>
<svg style="left:1182px;top:591px" width="90" height="7"><polyline points="0.0,1.0 4.0,5.0 8.0,1.0 12.0,5.0 16.0,1.0 20.0,5.0 24.0,1.0 28.0,5.0 32.0,1.0 36.0,5.0 40.0,1.0 44.0,5.0 48.0,1.0 52.0,5.0 56.0,1.0 60.0,5.0 64.0,1.0 68.0,5.0 72.0,1.0 76.0,5.0 80.0,1.0 84.0,5.0 88.0,1.0" fill="none" stroke="#5A9A5A" stroke-width="1.6"/></svg>
<svg style="left:1248px;top:1088px" width="133" height="7"><polyline points="0.0,1.0 4.0,5.0 8.0,1.0 12.0,5.0 16.0,1.0 20.0,5.0 24.0,1.0 28.0,5.0 32.0,1.0 36.0,5.0 40.0,1.0 44.0,5.0 48.0,1.0 52.0,5.0 56.0,1.0 60.0,5.0 64.0,1.0 68.0,5.0 72.0,1.0 76.0,5.0 80.0,1.0 84.0,5.0 88.0,1.0 92.0,5.0 96.0,1.0 100.0,5.0 104.0,1.0 108.0,5.0 112.0,1.0 116.0,5.0 120.0,1.0 124.0,5.0 128.0,1.0" fill="none" stroke="#5A9A5A" stroke-width="1.6"/></svg>
<svg style="left:1270px;top:1705px" width="133" height="7"><polyline points="0.0,1.0 4.0,5.0 8.0,1.0 12.0,5.0 16.0,1.0 20.0,5.0 24.0,1.0 28.0,5.0 32.0,1.0 36.0,5.0 40.0,1.0 44.0,5.0 48.0,1.0 52.0,5.0 56.0,1.0 60.0,5.0 64.0,1.0 68.0,5.0 72.0,1.0 76.0,5.0 80.0,1.0 84.0,5.0 88.0,1.0 92.0,5.0 96.0,1.0 100.0,5.0 104.0,1.0 108.0,5.0 112.0,1.0 116.0,5.0 120.0,1.0 124.0,5.0 128.0,1.0" fill="none" stroke="#5A9A5A" stroke-width="1.6"/></svg>
<div class="ln" style="top:170px;color:#606366">49</div>
<div class="ln" style="top:232px;color:#606366">50</div>
<div class="ln" style="top:294px;color:#606366">51</div>
<div class="ln" style="top:356px;color:#606366">52</div>
<div class="ln" style="top:418px;color:#606366">53</div>
<div class="ln" style="top:480px;color:#606366">54</div>
<div class="ln" style="top:542px;color:#606366">55</div>
<div class="ln" style="top:604px;color:#606366">56</div>
<div class="ln" style="top:666px;color:#606366">57</div>
<div class="ln" style="top:728px;color:#606366">58</div>
<div class="ln" style="top:790px;color:#606366">59</div>
<div class="ln" style="top:852px;color:#606366">60</div>
<div class="ln" style="top:914px;color:#A4A3A3">61</div>
<div class="ln" style="top:976px;color:#606366">62</div>
<div class="ln" style="top:1038px;color:#606366">63</div>
<div class="ln" style="top:1100px;color:#606366">64</div>
<div class="ln" style="top:1162px;color:#606366">65</div>
<div class="ln" style="top:1224px;color:#606366">66</div>
<div class="ln" style="top:1286px;color:#606366">67</div>
<div class="ln" style="top:1348px;color:#606366">68</div>
<div class="ln" style="top:1410px;color:#606366">69</div>
<div class="ln" style="top:1472px;color:#606366">70</div>
<div class="ln" style="top:1534px;color:#606366">71</div>
<div class="ln" style="top:1596px;color:#606366">72</div>
<div class="ln" style="top:1658px;color:#606366">73</div>
<div class="ln" style="top:1720px;color:#606366">74</div>
<div class="ln" style="top:1782px;color:#606366">75</div>
<div class="ab" style="left:857px;top:170px;width:2px;height:1682px;background:#555555;"></div>
<svg style="left:844px;top:375px" width="28" height="34" viewBox="0 0 28 34"><path d="M1.5 1.5 H26.5 V20 L14 32 L1.5 20 Z" fill="#2E3030" stroke="#5A5D5E" stroke-width="2"/><path d="M7 11.5 H21" stroke="#5A5D5E" stroke-width="2"/></svg>
<svg style="left:844px;top:623px" width="28" height="34" viewBox="0 0 28 34"><path d="M1.5 1.5 H26.5 V20 L14 32 L1.5 20 Z" fill="#2E3030" stroke="#5A5D5E" stroke-width="2"/><path d="M7 11.5 H21" stroke="#5A5D5E" stroke-width="2"/></svg>
<svg style="left:844px;top:933px" width="28" height="34" viewBox="0 0 28 34"><path d="M1.5 1.5 H26.5 V20 L14 32 L1.5 20 Z" fill="#2E3030" stroke="#5A5D5E" stroke-width="2"/><path d="M7 11.5 H21" stroke="#5A5D5E" stroke-width="2"/></svg>
<svg style="left:844px;top:1057px" width="28" height="34" viewBox="0 0 28 34"><path d="M1.5 1.5 H26.5 V20 L14 32 L1.5 20 Z" fill="#2E3030" stroke="#5A5D5E" stroke-width="2"/><path d="M7 11.5 H21" stroke="#5A5D5E" stroke-width="2"/></svg>
<svg style="left:844px;top:1553px" width="28" height="34" viewBox="0 0 28 34"><path d="M1.5 1.5 H26.5 V20 L14 32 L1.5 20 Z" fill="#2E3030" stroke="#5A5D5E" stroke-width="2"/><path d="M7 11.5 H21" stroke="#5A5D5E" stroke-width="2"/></svg>
<svg style="left:844px;top:1677px" width="28" height="34" viewBox="0 0 28 34"><path d="M1.5 1.5 H26.5 V20 L14 32 L1.5 20 Z" fill="#2E3030" stroke="#5A5D5E" stroke-width="2"/><path d="M7 11.5 H21" stroke="#5A5D5E" stroke-width="2"/></svg>
<svg style="left:844px;top:1360px" width="28" height="34" viewBox="0 0 28 34"><path d="M1.5 32.5 H26.5 V14 L14 2 L1.5 14 Z" fill="#2E3030" stroke="#5A5D5E" stroke-width="2"/><path d="M7 21.5 H21" stroke="#5A5D5E" stroke-width="2"/></svg>
<svg style="left:844px;top:1484px" width="28" height="34" viewBox="0 0 28 34"><path d="M1.5 32.5 H26.5 V14 L14 2 L1.5 14 Z" fill="#2E3030" stroke="#5A5D5E" stroke-width="2"/><path d="M7 21.5 H21" stroke="#5A5D5E" stroke-width="2"/></svg>
<div class="ab" style="left:1173px;top:956px;width:1025px;height:192px;border:6px solid #FF0000;box-shadow:3px 3px 9px rgba(0,0,0,0.45), inset 2px 2px 5px rgba(0,0,0,0.3)"></div>
<div class="ab" style="left:2672px;top:174px;width:404px;height:44px;background:#282A2A;border-radius:6px"></div>
<svg style="left:2692px;top:185px" width="22" height="22" viewBox="0 0 22 22"><circle cx="11" cy="11" r="10" fill="#C43E3E"/><rect x="9" y="4" width="4" height="8" fill="#282A2A"/><rect x="9" y="14" width="4" height="4" fill="#282A2A"/></svg>
<div class="t" style="left:2719.0px;top:178.0px;font-size:25.5px;line-height:40px;color:#BBBBBB;font-weight:normal;">23</div>
<svg style="left:2764px;top:184px" width="26" height="24" viewBox="0 0 26 24"><polygon points="13,1 25,23 1,23" fill="#D9A31A"/><rect x="11" y="8" width="4" height="7" fill="#282A2A"/><rect x="11" y="17" width="4" height="3.5" fill="#282A2A"/></svg>
<div class="t" style="left:2795.0px;top:178.0px;font-size:25.5px;line-height:40px;color:#BBBBBB;font-weight:normal;">108</div>
<svg style="left:2852px;top:184px" width="26" height="24" viewBox="0 0 26 24"><polygon points="13,1 25,23 1,23" fill="#857A5C"/><rect x="11" y="8" width="4" height="7" fill="#282A2A"/><rect x="11" y="17" width="4" height="3.5" fill="#282A2A"/></svg>
<div class="t" style="left:2882.0px;top:178.0px;font-size:25.5px;line-height:40px;color:#BBBBBB;font-weight:normal;">6</div>
<svg style="left:2912px;top:184px" width="24" height="26" viewBox="0 0 24 26"><path d="M2 10 L9 17 L22 2" fill="none" stroke="#4FA557" stroke-width="4"/><path d="M1 24 L5 19 L9 23 L13 19 L17 23 L22 19" fill="none" stroke="#4FA557" stroke-width="2"/></svg>
<div class="t" style="left:2940.0px;top:178.0px;font-size:25.5px;line-height:40px;color:#BBBBBB;font-weight:normal;">102</div>
<svg style="left:3004px;top:188px" width="20" height="14"><path d="M2 12 L10 3 L18 12" fill="none" stroke="#AFB1B3" stroke-width="2.4"/></svg>
<svg style="left:3046px;top:190px" width="20" height="14"><path d="M2 2 L10 11 L18 2" fill="none" stroke="#AFB1B3" stroke-width="2.4"/></svg>
<div class="ab" style="left:2748px;top:250px;width:216px;height:56px;background:#45484A;border-radius:6px"></div>
<svg style="left:2762px;top:261px" width="34" height="34" viewBox="0 0 34 34"><defs><linearGradient id="psg2" x1="0" y1="0" x2="1" y2="1"><stop offset="0" stop-color="#FF3FA0"/><stop offset="0.45" stop-color="#B44BF0"/><stop offset="1" stop-color="#7C5BF8"/></linearGradient></defs>
<polygon points="1,7 6,1 17,3 27,3 31,12 29,22 32,27 20,34 9,30 2,22" fill="url(#psg2)"/><rect x="6" y="6.5" width="20" height="20.5" fill="#050208"/>
<path d="M8.5 17.5 V8.5 H11.6 Q14 8.5 14 11 Q14 13.5 11.6 13.5 H8.5" fill="none" stroke="#fff" stroke-width="1.9"/><path d="M21 9.6 Q19.6 8.3 17.8 8.5 Q15.9 8.8 16.1 10.6 Q16.4 12.4 18.6 12.9 Q21 13.5 21 15.4 Q20.9 17.4 18.3 17.4 Q16.6 17.3 15.6 16.1" fill="none" stroke="#fff" stroke-width="1.8"/><rect x="8" y="22.5" width="7" height="1.8" fill="#fff"/></svg>
<svg style="left:2816px;top:264px" width="28" height="28" viewBox="0 0 28 28">
<path d="M14 14 L1.88 7 A14 14 0 0 1 26.12 7 Z" fill="#DB4A3D"/>
<path d="M14 14 L14 28 A14 14 0 0 1 1.88 7 Z" fill="#1EA362"/>
<path d="M14 14 L26.12 7 A14 14 0 0 1 14 28 Z" fill="#FCC934"/>
<path d="M14 14 L14 7 L26.12 7 Z" fill="#DB4A3D"/><path d="M14 14 L8 24.5 L14 28 Z" fill="#1EA362"/><path d="M14 14 L20 10.5 L1.88 7 Z" fill="none"/>
<circle cx="14" cy="14" r="6.6" fill="#fff"/><circle cx="14" cy="14" r="5.2" fill="#4B8BF5"/></svg>
<svg style="left:2866px;top:261px" width="32" height="33" viewBox="0 0 32 33"><defs><radialGradient id="ffg" cx="0.75" cy="0.2" r="0.95"><stop offset="0" stop-color="#FFE94A"/><stop offset="0.35" stop-color="#FFA02E"/><stop offset="0.7" stop-color="#FF4A3A"/><stop offset="1" stop-color="#E31587"/></radialGradient></defs>
<path d="M21 1 Q31 9 30.5 19 Q30 31 16 32 Q2 32 1.2 19 Q1 12 4 8 L5 11 L7 6 L9 9 Q12 6.5 16 6.8 Q20 7 22 9 Q20 4 21 1 Z" fill="url(#ffg)"/>
<circle cx="16" cy="18.5" r="6.5" fill="#7B3FE4"/><path d="M9.5 14 Q13 12 16.5 13 L12 16 Z" fill="#FF9A2E"/></svg>
<svg style="left:2920px;top:264px" width="28" height="28" viewBox="0 0 28 28"><defs><linearGradient id="edg" x1="0" y1="1" x2="1" y2="0.2"><stop offset="0" stop-color="#0A5CA8"/><stop offset="0.45" stop-color="#1390DE"/><stop offset="0.75" stop-color="#2EC3D8"/><stop offset="1" stop-color="#5BE38A"/></linearGradient></defs>
<path d="M1 15 Q1 2 14.5 1 Q27 1 27.5 13 Q27.5 18 23 19.5 Q18.5 20 17.5 16.5 Q19 14 17 11.5 Q13 8 8.5 12 Q5 16 8 21 Q11 26 17 26 Q22 26 26 22 Q22 28 13 28 Q1 27 1 15 Z" fill="url(#edg)"/>
<path d="M3 10 Q8 5 14 7 Q8 8 6 14 Q4 21 10 25 Q2 22 3 10 Z" fill="#0B4F93" opacity="0.55"/></svg>
<div class="ab" style="left:3052px;top:368px;width:28px;height:5px;background:#7A7358;"></div>
<div class="ab" style="left:3052px;top:454px;width:28px;height:5px;background:#7A7358;"></div>
<div class="ab" style="left:3052px;top:474px;width:28px;height:5px;background:#C9A02A;"></div>
<div class="ab" style="left:3052px;top:506px;width:28px;height:5px;background:#B12E2E;"></div>
<div class="ab" style="left:3052px;top:528px;width:28px;height:5px;background:#C9A02A;"></div>
<div class="ab" style="left:3052px;top:558px;width:28px;height:5px;background:#B12E2E;"></div>
<div class="ab" style="left:3052px;top:612px;width:28px;height:5px;background:#B12E2E;"></div>
<div class="ab" style="left:3052px;top:632px;width:28px;height:5px;background:#B12E2E;"></div>
<div class="ab" style="left:3052px;top:664px;width:28px;height:5px;background:#B12E2E;"></div>
<div class="ab" style="left:3052px;top:844px;width:28px;height:5px;background:#C9A02A;"></div>
<div class="ab" style="left:3052px;top:1244px;width:28px;height:5px;background:#B12E2E;"></div>
<div class="ab" style="left:3052px;top:1381px;width:28px;height:5px;background:#6E4A34;"></div>
<div class="ab" style="left:3052px;top:1687px;width:28px;height:5px;background:#B12E2E;"></div>
<div class="ab" style="left:3052px;top:1739px;width:28px;height:5px;background:#B12E2E;"></div>
<div class="ab" style="left:3052px;top:1780px;width:28px;height:5px;background:#7A7358;"></div>
<div class="ab" style="left:3052px;top:876px;width:28px;height:62px;background:#BE961D;"></div>
<div class="ab" style="left:3052px;top:980px;width:28px;height:170px;background:#BE961D;"></div>
<div class="ab" style="left:3052px;top:1285px;width:28px;height:74px;background:#BE961D;"></div>
<div class="ab" style="left:3052px;top:1677px;width:28px;height:10px;background:#BE961D;"></div>
<div class="ab" style="left:3062px;top:730px;width:16px;height:284px;background:rgba(110,110,110,0.45);border-radius:3px"></div>
<div class="ab" style="left:876px;top:1834px;width:809px;height:16px;background:rgba(150,150,150,0.35);border-radius:3px"></div>
<div class="ab" style="left:690px;top:1852px;width:2391px;height:48px;background:#313335;"></div>
<div class="ab" style="left:690px;top:1852px;width:2391px;height:1px;background:#3A3A3A;"></div>
<div class="ab" style="left:3081px;top:116px;width:1px;height:1784px;background:#2F3031;"></div>
<svg style="left:3091px;top:136px" width="24" height="26" viewBox="0 0 24 26"><path d="M0.5 4 Q0.5 0.5 11.5 0.5 Q22.5 0.5 22.5 4 V20.5 Q22.5 24.5 11.5 24.5 Q0.5 24.5 0.5 20.5 Z" fill="#AFB1B3"/><path d="M0.5 5 Q11.5 10 22.5 5 M0.5 10.8 Q11.5 15.8 22.5 10.8 M0.5 16.5 Q11.5 21.5 22.5 16.5" fill="none" stroke="#3C3F41" stroke-width="1.6"/></svg>
<div class="t" style="left:3116px;top:166px;font-size:24px;line-height:30px;color:#BBBBBB;transform-origin:0 0;transform:rotate(90deg)">Database</div>
<svg style="left:3088px;top:310px" width="30" height="30" viewBox="0 0 30 30"><path d="M4 22 Q6 18 6 12 Q7 5 14 5 Q21 5 22 12 Q22 18 24 22 Z" fill="#AFB1B3"/><circle cx="14" cy="26" r="3" fill="#AFB1B3"/><circle cx="23" cy="7" r="6" fill="#3592C4" stroke="#3C3F41" stroke-width="1.5"/></svg>
<div class="t" style="left:3116px;top:346px;font-size:24.4px;line-height:30px;color:#BBBBBB;transform-origin:0 0;transform:rotate(90deg)">Notifications</div>
<div class="ab" style="left:0px;top:1899px;width:3120px;height:2px;background:#2B2B2B;"></div>
<div class="t" style="left:101.0px;top:1906.2px;font-size:23.9px;line-height:40px;color:#BBBBBB;font-weight:normal;">Version Control</div>
<div class="t" style="left:343.8px;top:1906.7px;font-size:23px;line-height:40px;color:#BBBBBB;font-weight:normal;">Run</div>
<div class="t" style="left:460.0px;top:1906.7px;font-size:23.3px;line-height:40px;color:#BBBBBB;font-weight:normal;">Debug</div>
<div class="t" style="left:603.0px;top:1906.7px;font-size:22.8px;line-height:40px;color:#BBBBBB;font-weight:normal;">TODO</div>
<div class="t" style="left:745.0px;top:1906.7px;font-size:23.1px;line-height:40px;color:#BBBBBB;font-weight:normal;">Problems</div>
<div class="t" style="left:919.0px;top:1906.2px;font-size:23.8px;line-height:40px;color:#BBBBBB;font-weight:normal;">Terminal</div>
<div class="t" style="left:1087.7px;top:1907.2px;font-size:22.2px;line-height:40px;color:#BBBBBB;font-weight:normal;">Services</div>
<svg style="left:70px;top:1912px" width="22" height="26" viewBox="0 0 22 26"><circle cx="5" cy="4" r="3" fill="#AFB1B3"/><circle cx="5" cy="22" r="3" fill="#AFB1B3"/><circle cx="17" cy="5" r="3" fill="#AFB1B3"/><path d="M5 4 V22 M17 5 Q17 14 5 16" fill="none" stroke="#AFB1B3" stroke-width="2.5"/></svg>
<svg style="left:313px;top:1912px" width="26" height="28" viewBox="0 0 26 28"><polygon points="1,1 19,12 1,23" fill="#AFB1B3"/><circle cx="19" cy="21" r="4" fill="#2DD22D"/></svg>
<svg style="left:427px;top:1912px" width="24" height="26" viewBox="0 0 24 26"><ellipse cx="12" cy="15" rx="8" ry="10" fill="#AFB1B3"/><rect x="1" y="11" width="22" height="2.5" fill="#AFB1B3"/><rect x="1" y="18" width="22" height="2.5" fill="#AFB1B3"/><path d="M6 2 L9 6 M18 2 L15 6" stroke="#AFB1B3" stroke-width="2.5"/></svg>
<svg style="left:573px;top:1915px" width="22" height="20" viewBox="0 0 22 20"><g fill="#AFB1B3"><rect x="0" y="1" width="3" height="3"/><rect x="5" y="1" width="16" height="3"/><rect x="0" y="8" width="3" height="3"/><rect x="5" y="8" width="16" height="3"/><rect x="0" y="15" width="3" height="3"/><rect x="5" y="15" width="16" height="3"/></g></svg>
<svg style="left:714px;top:1912px" width="22" height="22" viewBox="0 0 22 22"><circle cx="11" cy="11" r="10.5" fill="#AFB1B3"/><rect x="9" y="4.5" width="4" height="8" fill="#3C3F41"/><rect x="9" y="14.5" width="4" height="3.5" fill="#3C3F41"/></svg>
<svg style="left:887px;top:1913px" width="24" height="22" viewBox="0 0 24 22"><rect x="0" y="0" width="23" height="21" fill="#AFB1B3"/><path d="M4 5 L9 9 L4 13" fill="none" stroke="#3C3F41" stroke-width="2"/><rect x="10" y="14" width="8" height="2" fill="#3C3F41"/></svg>
<svg style="left:1054px;top:1910px" width="26" height="26" viewBox="0 0 26 26"><polygon points="7,1 19,1 25,13 19,25 7,25 1,13" fill="#AFB1B3"/><polygon points="10,7 19,13 10,19" fill="#3C3F41"/></svg>
<div class="ab" style="left:0px;top:1944px;width:3120px;height:2px;background:#4A4C4E;"></div>
<svg style="left:11px;top:1954px" width="26" height="24" viewBox="0 0 26 24"><rect x="5.5" y="1" width="19" height="17" fill="none" stroke="#AFB1B3" stroke-width="2"/><path d="M1 5 V23 H20" fill="none" stroke="#AFB1B3" stroke-width="2"/></svg>
<div class="t" style="left:54.0px;top:1945.5px;font-size:25.5px;line-height:40px;color:#BBBBBB;font-weight:normal;">Breakpoint reached (today 15:25)</div>
<div class="t" style="left:2572.4px;top:1946.6px;font-size:23.4px;line-height:40px;color:#BBBBBB;font-weight:normal;">PHP: 5.6</div>
<div class="t" style="left:2691.5px;top:1946.1px;font-size:24.2px;line-height:40px;color:#BBBBBB;font-weight:normal;">61:32</div>
<div class="t" style="left:2777.0px;top:1947.1px;font-size:22px;line-height:40px;color:#BBBBBB;font-weight:normal;">CRLF</div>
<div class="t" style="left:2859.5px;top:1946.1px;font-size:23.8px;line-height:40px;color:#BBBBBB;font-weight:normal;">UTF-8</div>
<div class="t" style="left:2952.0px;top:1946.1px;font-size:24.2px;line-height:40px;color:#BBBBBB;font-weight:normal;">4 spaces</div>
<svg style="left:3073px;top:1954px" width="26" height="24" viewBox="0 0 26 24"><path d="M3 11 V6 Q3 1 8.5 1 Q14 1 14 6" fill="none" stroke="#AFB1B3" stroke-width="2.5"/><rect x="8" y="10" width="16" height="13" fill="#AFB1B3"/></svg>
</body></html>
